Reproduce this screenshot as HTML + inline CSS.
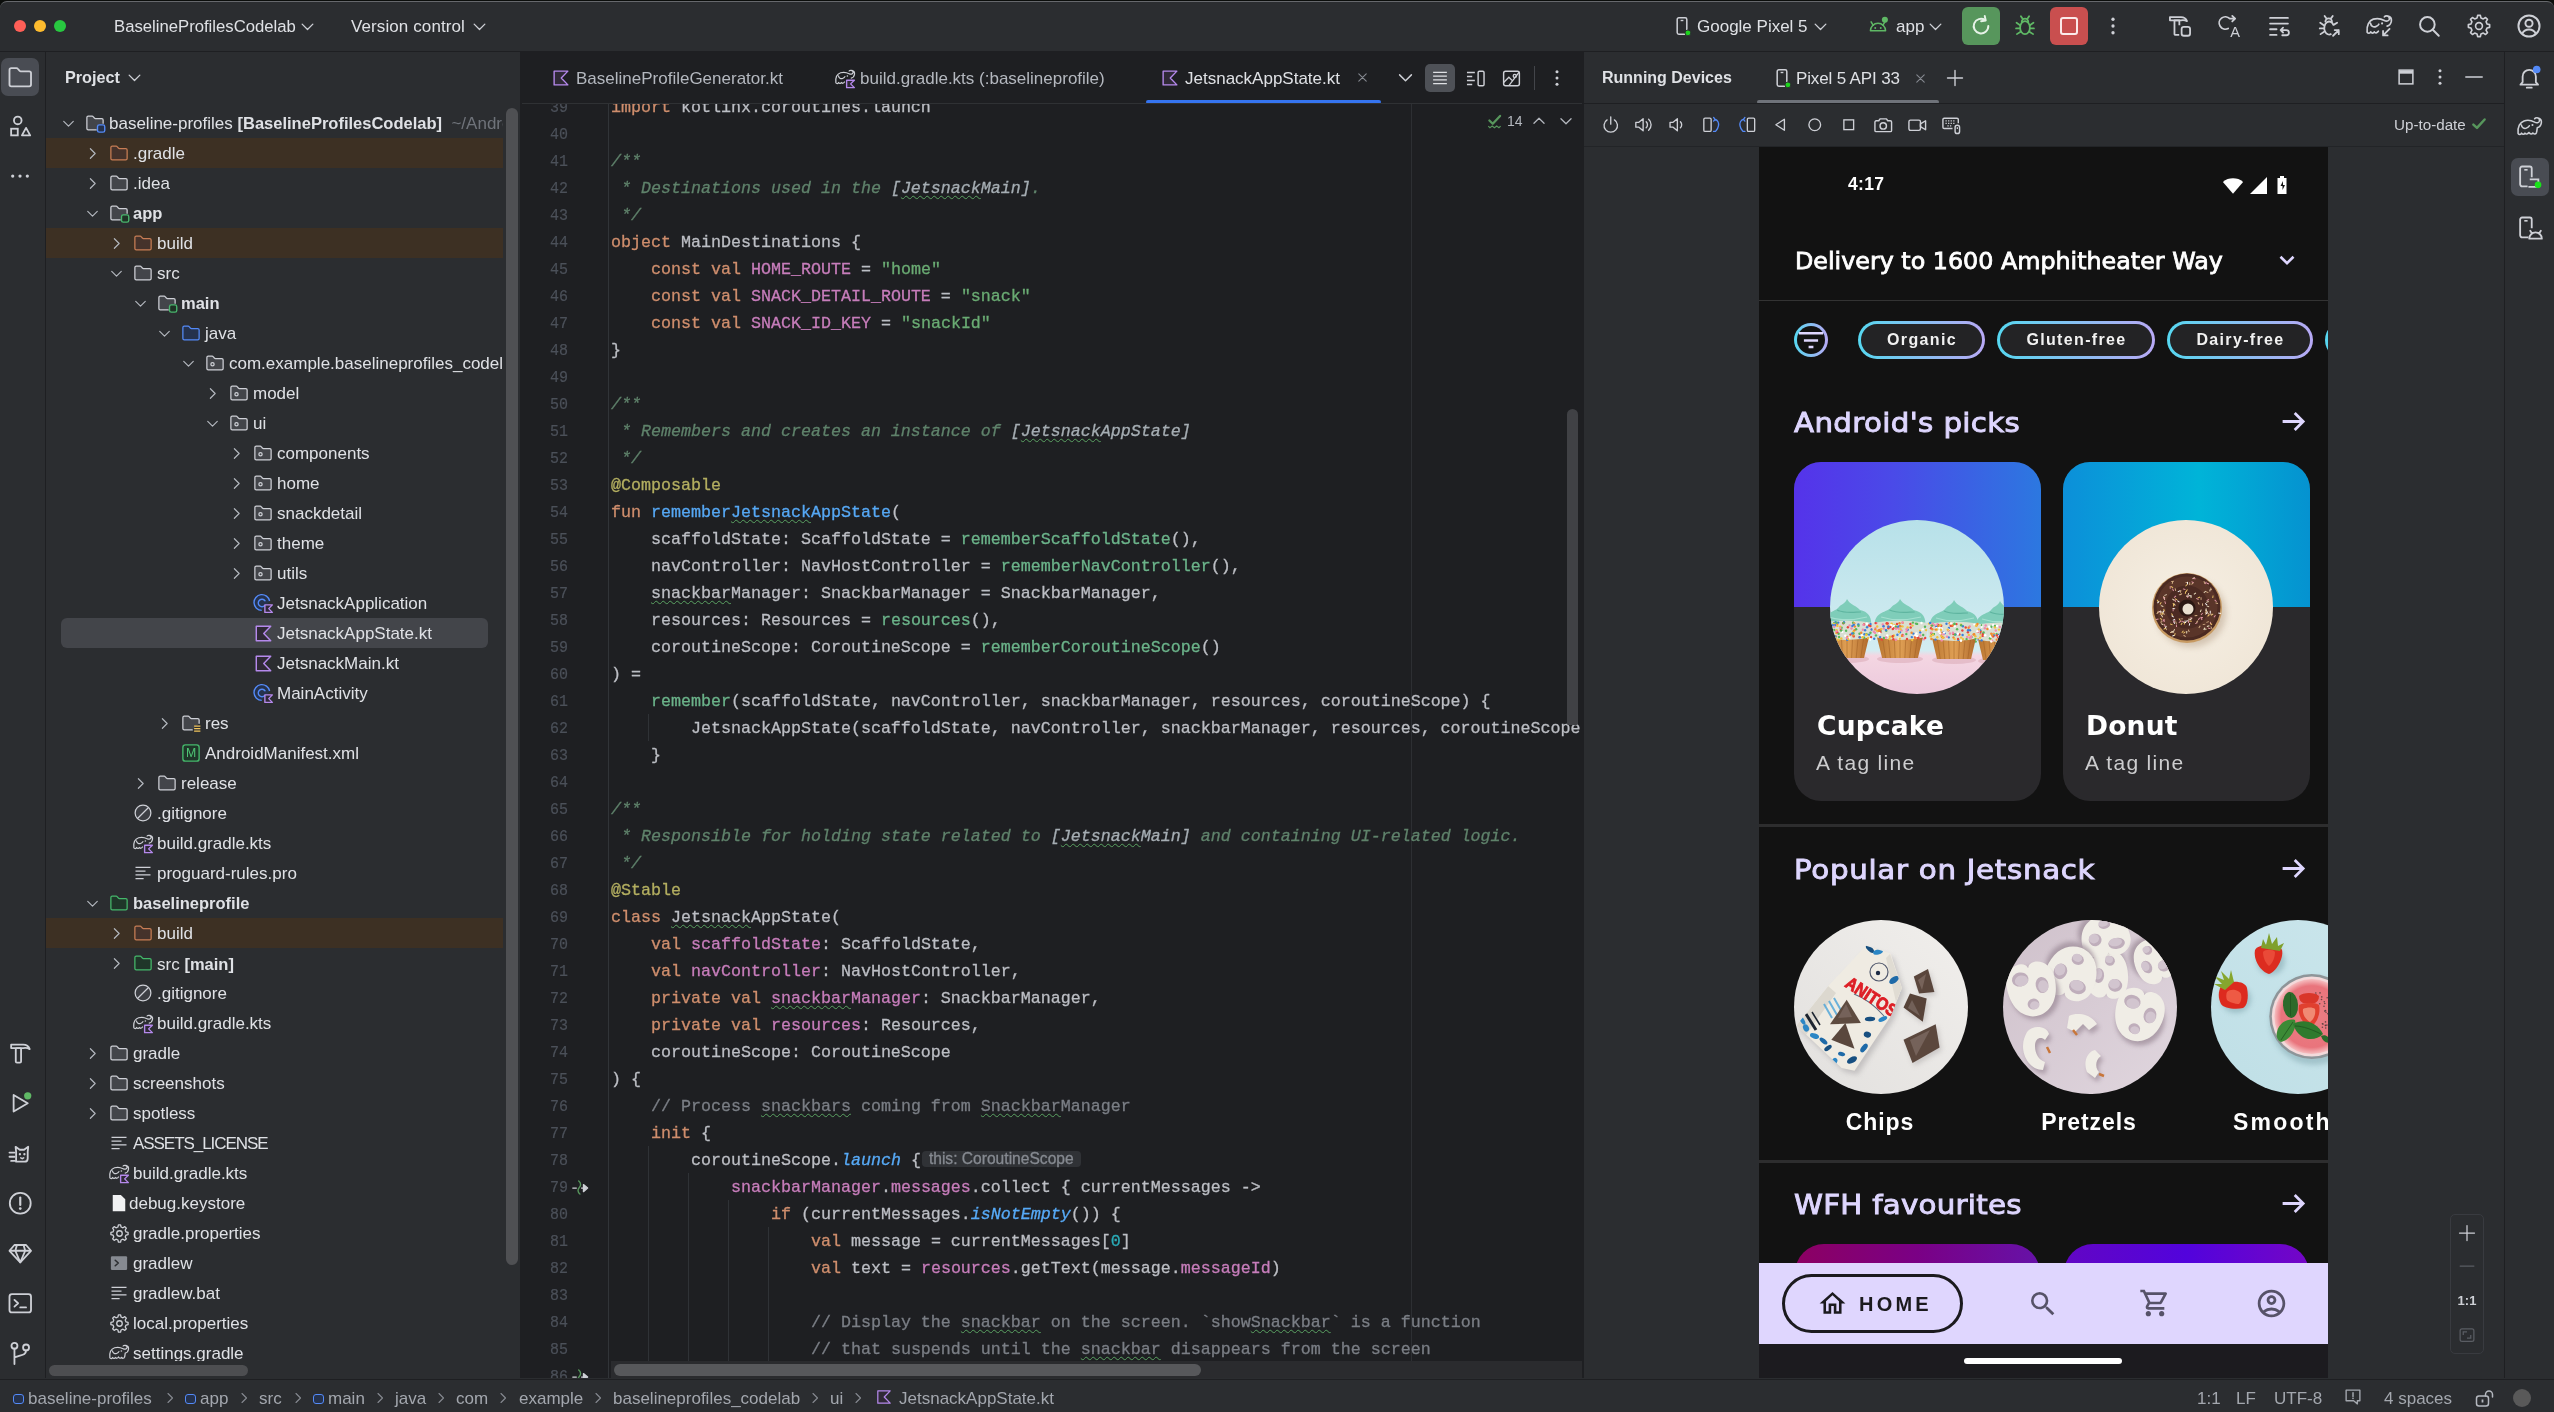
<!DOCTYPE html><html><head><meta charset="utf-8"><title>Android Studio</title><style>
*{box-sizing:border-box;margin:0;padding:0}
html,body{width:2554px;height:1412px;overflow:hidden;background:#2b2d30}
body{position:relative;font-family:"Liberation Sans",sans-serif;font-size:17px;color:#dfe1e5;-webkit-font-smoothing:antialiased}
#w{position:absolute;left:0;top:0;width:2554px;height:1412px;overflow:hidden;will-change:transform}
.abs{position:absolute}
svg{display:block;overflow:visible}
.b{font-weight:700;font-size:16.5px}
.mono{font-family:"Liberation Mono",monospace}
/* tree */
.row{position:absolute;left:46px;width:457px;height:30px;overflow:hidden;white-space:nowrap}
.row.ex{background:#3d3023}
.row .ic{position:absolute;top:5px}
.row .ch{position:absolute;top:5px}
.row .tx{position:absolute;top:1px;line-height:30px;white-space:pre}
.row .tx.bo{top:0}
.gray{color:#6f737a}
/* code */
.ln{position:absolute;left:522px;width:46px;text-align:right;font-family:"Liberation Mono",monospace;font-size:16.67px;line-height:27px;height:27px;color:#4b5059;transform:scaleX(.9);transform-origin:100% 50%;-webkit-text-stroke:.2px}
.cl{position:absolute;left:611px;font-family:"Liberation Mono",monospace;font-size:16.67px;line-height:27px;height:27px;white-space:pre;color:#bcbec4;-webkit-text-stroke:.3px}
.k{color:#cf8e6d}.s{color:#6aab73}.d{color:#5f826b;font-style:italic}.dl{color:#a5adb3;font-style:italic}
.c{color:#7a7e85}.p{color:#c77dbb}.f{color:#56a8f5}.a{color:#b3ae60}.g{color:#6bb38a}.e{color:#57aaf7;font-style:italic}.n{color:#2aacb8}
.t{text-decoration:underline wavy #5aa262;text-decoration-thickness:1.200px;text-underline-offset:2px;text-decoration-skip-ink:none}
.hint{display:inline-block;font-family:"Liberation Sans",sans-serif;font-size:15.600px;line-height:16px;height:16px;color:#868a91;background:#303236;border-radius:4px;padding:0 7px;margin-left:1px;position:relative;top:-1px;vertical-align:baseline}
.guide{position:absolute;width:1px;background:#2f3236}

.tbk{position:absolute;top:0;left:0;width:2554px;height:10px;background:#0b0d0b}
.tb{position:absolute;top:1px;left:0;width:2554px;height:51px;background:#2b2d30;border-bottom:1px solid #1e1f22;border-top:1px solid #66686c;border-radius:7px 7px 0 0}
.tb>*{margin-top:-2px}
.sb{position:absolute;top:1379px;left:0;width:2554px;height:33px;background:#2b2d30;border-top:1px solid #1e1f22;color:#a3a7ae;white-space:pre}
.sb .x{position:absolute;top:7.500px;line-height:22px}
.sb .sep{position:absolute;top:10px}
.ti{position:absolute;top:13px}

.dj{font-family:"DejaVu Sans","Liberation Sans",sans-serif}
.ph{position:absolute;left:1759px;top:147px;width:569px;height:1231px;background:#121212;overflow:hidden}
.ph .h{position:absolute;left:35px;-webkit-text-stroke:1px #ded6fe;color:#ded6fe;font-family:"DejaVu Sans","Liberation Sans",sans-serif;font-size:29.300px;line-height:40px;white-space:pre;transform:scaleY(.92);transform-origin:0 50%}
.ph .dv{position:absolute;left:0;width:569px;height:3px;background:#2d2d2e}
.chip{position:absolute;top:174px;height:38px;border-radius:19px;background:linear-gradient(90deg,#56d7f0,#b8a9f5);}
.chip i{position:absolute;left:3px;top:3px;right:3px;bottom:3px;border-radius:16px;background:#232325}
.chip b{position:absolute;left:0;right:0;top:0;line-height:37px;text-align:center;font-size:16px;letter-spacing:1.350px;color:#f1f1f1;padding-left:1px}
.card{position:absolute;top:315px;width:247px;height:339px;border-radius:27px;background:#2a292c;overflow:hidden}
.card .gr{position:absolute;left:0;top:0;width:247px;height:145px}
.card .nm{position:absolute;left:23px;top:244px;font-family:"DejaVu Sans","Liberation Sans",sans-serif;font-weight:700;font-size:26.500px;line-height:40px;color:#fff;letter-spacing:.2px}
.card .tg{position:absolute;left:22px;top:286px;font-size:21px;line-height:30px;color:#cdcdcf;letter-spacing:1.300px}
.circ{position:absolute;width:174px;height:174px;border-radius:50%;overflow:hidden}
.lbl{position:absolute;top:957px;width:220px;text-align:center;font-weight:700;font-size:23px;letter-spacing:.9px;line-height:36px;color:#fff;white-space:pre}

.ls{position:absolute;left:0;top:52px;width:46px;height:1326px;background:#2b2d30;border-right:1px solid #1e1f22}
.rs{position:absolute;left:2504px;top:52px;width:50px;height:1326px;background:#2b2d30;border-left:1px solid #1e1f22}
</style></head><body><div id="w">
<div class="tbk"></div><div class="tb">
<div class="abs" style="left:14px;top:20px;width:12px;height:12px;border-radius:50%;background:#ff5f57"></div>
<div class="abs" style="left:34px;top:20px;width:12px;height:12px;border-radius:50%;background:#febc2e"></div>
<div class="abs" style="left:54px;top:20px;width:12px;height:12px;border-radius:50%;background:#28c840"></div>
<div class="abs" style="left:114px;top:15px;line-height:24px;font-size:16.700px">BaselineProfilesCodelab</div>
<div class="abs" style="left:298px;top:17px"><svg class="" width="19" height="19" viewBox="0 0 16 16" style="" fill="none"><path d="M3.500 6L8 10.500 12.500 6" stroke="#ced0d6" stroke-width="1.100" stroke-linecap="round" stroke-linejoin="round"/></svg></div>
<div class="abs" style="left:351px;top:15px;line-height:24px;letter-spacing:.1px">Version control</div>
<div class="abs" style="left:470px;top:17px"><svg class="" width="19" height="19" viewBox="0 0 16 16" style="" fill="none"><path d="M3.500 6L8 10.500 12.500 6" stroke="#ced0d6" stroke-width="1.100" stroke-linecap="round" stroke-linejoin="round"/></svg></div>
<div class="abs" style="left:1671.0px;top:15px"><svg class="" width="22" height="22" viewBox="0 0 16 16" style="" fill="none"><rect x="4.500" y="2" width="7" height="12" rx="1.200" stroke="#ced0d6" stroke-width="1.100"/><path d="M7 4h2" stroke="#ced0d6" stroke-width="1"/><circle cx="12.300" cy="13" r="2.100" fill="#1ed31e" stroke="#2b2d30" stroke-width=".7"/></svg></div>
<div class="abs" style="left:1697px;top:15px;line-height:24px">Google Pixel 5</div>
<div class="abs" style="left:1811px;top:17px"><svg class="" width="19" height="19" viewBox="0 0 16 16" style="" fill="none"><path d="M3.500 6L8 10.500 12.500 6" stroke="#ced0d6" stroke-width="1.100" stroke-linecap="round" stroke-linejoin="round"/></svg></div>
<div class="abs" style="left:1867.0px;top:15px"><svg class="" width="22" height="22" viewBox="0 0 16 16" style="" fill="none"><path d="M2.500 11.500a5.500 5.500 0 0 1 11 0z" stroke="#5fb865" stroke-width="1.100" stroke-linejoin="round"/><path d="M4.500 7.500L3 5M11.500 7.500L13 5" stroke="#5fb865" stroke-width="1.100" stroke-linecap="round"/><circle cx="6" cy="9.500" r=".7" fill="#5fb865"/><circle cx="10" cy="9.500" r=".7" fill="#5fb865"/><circle cx="13" cy="3.500" r="2.200" fill="#5fb865"/></svg></div>
<div class="abs" style="left:1896px;top:15px;line-height:24px">app</div>
<div class="abs" style="left:1926px;top:17px"><svg class="" width="19" height="19" viewBox="0 0 16 16" style="" fill="none"><path d="M3.500 6L8 10.500 12.500 6" stroke="#ced0d6" stroke-width="1.100" stroke-linecap="round" stroke-linejoin="round"/></svg></div>
<div class="abs" style="left:1962px;top:7px;width:38px;height:38px;border-radius:6px;background:#57965c"></div>
<div class="abs" style="left:1968.0px;top:13px"><svg class="" width="26" height="26" viewBox="0 0 16 16" style="" fill="none"><path d="M12.500 8A4.500 4.500 0 1 1 10.500 4.300" stroke="#e6f2e7" stroke-width="1.200" stroke-linecap="round"/><path d="M10.300 1.800l.6 2.800-2.800.5" stroke="#e6f2e7" stroke-width="1.200" stroke-linecap="round" stroke-linejoin="round"/></svg></div>
<div class="abs" style="left:2012.0px;top:13px"><svg class="" width="26" height="26" viewBox="0 0 16 16" style="" fill="none"><ellipse cx="8" cy="9" rx="3" ry="4" stroke="#5fb865" stroke-width="1.100"/><path d="M6 5.500a2 2 0 0 1 4 0M5 7.500L2.800 6M11 7.500L13.200 6M5 9.500H2.500M11 9.500h2.500M5.300 11.500L3 13M10.700 11.500L13 13M6.500 3.500L5.500 2M9.500 3.500l1-1.500" stroke="#5fb865" stroke-width="1.100" stroke-linecap="round"/></svg></div>
<div class="abs" style="left:2050px;top:7px;width:38px;height:38px;border-radius:6px;background:#c94f4f"></div>
<div class="abs" style="left:2060px;top:17px;width:18px;height:18px;border-radius:3px;border:2px solid #fbeaea"></div>
<div class="abs" style="left:2101.0px;top:14px"><svg class="" width="24" height="24" viewBox="0 0 16 16" style="" fill="none"><circle cx="8" cy="3.500" r="1.100" fill="#ced0d6"/><circle cx="8" cy="8" r="1.100" fill="#ced0d6"/><circle cx="8" cy="12.500" r="1.100" fill="#ced0d6"/></svg></div>
<div class="abs" style="left:2167.0px;top:13px"><svg class="" width="26" height="26" viewBox="0 0 16 16" style="" fill="none"><path d="M1.800 2.500h6.800c1.900 0 3.100.9 3.700 2.500-1.100-.6-2.400-.8-3.700-.5H1.800z" stroke="#ced0d6" stroke-width="1.100" stroke-linejoin="round"/><path d="M7.500 13.500H5.200a.6.6 0 0 1-.6-.6V4.600h3v3" stroke="#ced0d6" stroke-width="1.100" stroke-linejoin="round"/><rect x="9" y="8.500" width="5.200" height="5.500" rx="1.400" stroke="#ced0d6" stroke-width="1.100"/></svg></div>
<div class="abs" style="left:2216.0px;top:13px"><svg class="" width="26" height="26" viewBox="0 0 16 16" style="" fill="none"><path d="M7.500 9.500A3.800 3.800 0 1 1 8.500 3.500h3M10 1.800l1.800 1.700L10 5.200" stroke="#ced0d6" stroke-width="1.100" stroke-linecap="round" stroke-linejoin="round"/><text x="11.800" y="14.600" font-family="Liberation Sans, sans-serif" font-size="9" text-anchor="middle" fill="#ced0d6">A</text></svg></div>
<div class="abs" style="left:2266.0px;top:13px"><svg class="" width="26" height="26" viewBox="0 0 16 16" style="" fill="none"><path d="M2.500 3h11M2.500 6.500h11M2.500 10h4M2.500 13.500h4" stroke="#ced0d6" stroke-width="1.100" stroke-linecap="round"/><path d="M9 10.500h3.500a1.600 1.600 0 0 1 0 3.200H10M10.500 9L9 10.500l1.500 1.500" stroke="#ced0d6" stroke-width="1.100" stroke-linecap="round" stroke-linejoin="round"/></svg></div>
<div class="abs" style="left:2316.0px;top:13px"><svg class="" width="26" height="26" viewBox="0 0 16 16" style="" fill="none"><path d="M9.500 12.800A3 4 0 1 1 10.800 7.500" stroke="#ced0d6" stroke-width="1.100"/><path d="M5.800 5.300a2 2 0 0 1 4 0M4.800 7.500L2.600 6M10.800 7.300L13 6M4.800 9.500H2.300M5 11.500L2.800 13M6.300 3.300l-1-1.500M9.300 3.300l1-1.500" stroke="#ced0d6" stroke-width="1.100" stroke-linecap="round"/><path d="M10.500 14l3.500-3.500M11.500 10.500H14V13" stroke="#ced0d6" stroke-width="1.100" stroke-linecap="round" stroke-linejoin="round"/></svg></div>
<div class="abs" style="left:2366.0px;top:13px"><svg class="" width="26" height="26" viewBox="0 0 16 16" style="" fill="none"><path d="M.7 11.8C.2 7.500 2 4.600 4.500 3.800 7 3 9.500 3.600 11.300 4.600c1.300.7 2.600.4 3-.6.400-1.100-.4-2.200-1.600-2.200-.7 0-1.200.3-1.400.6M13.500 1.900c1.500.4 2.300 1.700 2.100 3.100-.3 1.700-1.300 2.800-2.600 3.100M2.800 6.400C3 8 4.600 9 6 8.400c1-.4 1.700-1 1.900-1.500M.7 11.800c.7 1 1.700.8 2.200-.2.600 1 1.700 1 2.200 0 .6.900 1.700.8 2.500-.4" stroke="#ced0d6" stroke-width="1.050" stroke-linecap="round" stroke-linejoin="round"/><circle cx="9.900" cy="6.400" r=".65" fill="#ced0d6"/><path d="M14.500 9.800l-4 4M10.500 11v2.800h2.800" stroke="#ced0d6" stroke-width="1.100" stroke-linecap="round" stroke-linejoin="round"/></svg></div>
<div class="abs" style="left:2416.0px;top:13px"><svg class="" width="26" height="26" viewBox="0 0 16 16" style="" fill="none"><circle cx="7" cy="7" r="4.500" stroke="#ced0d6" stroke-width="1.200"/><path d="M10.500 10.500L14 14" stroke="#ced0d6" stroke-width="1.200" stroke-linecap="round"/></svg></div>
<div class="abs" style="left:2466px;top:13px"><svg class="" width="26" height="26" viewBox="0 0 16 16" style="" fill="none"><path d="M12.96 6.81 L14.55 7.17 L14.55 8.83 L12.96 9.19 L12.35 10.66 L13.22 12.05 L12.05 13.22 L10.66 12.35 L9.19 12.96 L8.83 14.55 L7.17 14.55 L6.81 12.96 L5.34 12.35 L3.95 13.22 L2.78 12.05 L3.65 10.66 L3.04 9.19 L1.45 8.83 L1.45 7.17 L3.04 6.81 L3.65 5.34 L2.78 3.95 L3.95 2.78 L5.34 3.65 L6.81 3.04 L7.17 1.45 L8.83 1.45 L9.19 3.04 L10.66 3.65 L12.05 2.78 L13.22 3.95 L12.35 5.34Z" stroke="#ced0d6" stroke-width="1" stroke-linejoin="round"/><circle cx="8" cy="8" r="2.100" stroke="#ced0d6" stroke-width="1"/></svg></div>
<div class="abs" style="left:2516.0px;top:13px"><svg class="" width="26" height="26" viewBox="0 0 16 16" style="" fill="none"><circle cx="8" cy="8" r="6.500" stroke="#ced0d6" stroke-width="1.200"/><circle cx="8" cy="6.300" r="2.200" stroke="#ced0d6" stroke-width="1.200"/><path d="M3.800 12.800c.8-1.800 2.300-2.600 4.200-2.600s3.400.8 4.200 2.600" stroke="#ced0d6" stroke-width="1.200"/></svg></div>
</div>
<div class="sb">
<div class="abs" style="left:13px;top:13.500px;width:10.500px;height:10.500px;border-radius:3px;border:1.600px solid #548af7;background:#25324d"></div><div class="x" style="left:28px">baseline-profiles</div><div class="sep" style="left:162px"><svg class="" width="16" height="16" viewBox="0 0 16 16" style="" fill="none"><path d="M6 3.500L10.500 8 6 12.500" stroke="#868a91" stroke-width="1.100" stroke-linecap="round" stroke-linejoin="round"/></svg></div><div class="abs" style="left:185px;top:13.500px;width:10.500px;height:10.500px;border-radius:3px;border:1.600px solid #548af7;background:#25324d"></div><div class="x" style="left:200px">app</div><div class="sep" style="left:236px"><svg class="" width="16" height="16" viewBox="0 0 16 16" style="" fill="none"><path d="M6 3.500L10.500 8 6 12.500" stroke="#868a91" stroke-width="1.100" stroke-linecap="round" stroke-linejoin="round"/></svg></div><div class="x" style="left:259px">src</div><div class="sep" style="left:290px"><svg class="" width="16" height="16" viewBox="0 0 16 16" style="" fill="none"><path d="M6 3.500L10.500 8 6 12.500" stroke="#868a91" stroke-width="1.100" stroke-linecap="round" stroke-linejoin="round"/></svg></div><div class="abs" style="left:313px;top:13.500px;width:10.500px;height:10.500px;border-radius:3px;border:1.600px solid #548af7;background:#25324d"></div><div class="x" style="left:328px">main</div><div class="sep" style="left:372px"><svg class="" width="16" height="16" viewBox="0 0 16 16" style="" fill="none"><path d="M6 3.500L10.500 8 6 12.500" stroke="#868a91" stroke-width="1.100" stroke-linecap="round" stroke-linejoin="round"/></svg></div><div class="x" style="left:395px">java</div><div class="sep" style="left:433px"><svg class="" width="16" height="16" viewBox="0 0 16 16" style="" fill="none"><path d="M6 3.500L10.500 8 6 12.500" stroke="#868a91" stroke-width="1.100" stroke-linecap="round" stroke-linejoin="round"/></svg></div><div class="x" style="left:456px">com</div><div class="sep" style="left:495px"><svg class="" width="16" height="16" viewBox="0 0 16 16" style="" fill="none"><path d="M6 3.500L10.500 8 6 12.500" stroke="#868a91" stroke-width="1.100" stroke-linecap="round" stroke-linejoin="round"/></svg></div><div class="x" style="left:519px">example</div><div class="sep" style="left:590px"><svg class="" width="16" height="16" viewBox="0 0 16 16" style="" fill="none"><path d="M6 3.500L10.500 8 6 12.500" stroke="#868a91" stroke-width="1.100" stroke-linecap="round" stroke-linejoin="round"/></svg></div><div class="x" style="left:613px">baselineprofiles_codelab</div><div class="sep" style="left:807px"><svg class="" width="16" height="16" viewBox="0 0 16 16" style="" fill="none"><path d="M6 3.500L10.500 8 6 12.500" stroke="#868a91" stroke-width="1.100" stroke-linecap="round" stroke-linejoin="round"/></svg></div><div class="x" style="left:830px">ui</div><div class="sep" style="left:850px"><svg class="" width="16" height="16" viewBox="0 0 16 16" style="" fill="none"><path d="M6 3.500L10.500 8 6 12.500" stroke="#868a91" stroke-width="1.100" stroke-linecap="round" stroke-linejoin="round"/></svg></div>
<div class="abs" style="left:875px;top:8px"><svg class="" width="18" height="18" viewBox="0 0 16 16" style="" fill="none"><path d="M2.5 2.5h11L8.2 8l5.3 5.5h-11z" fill="#2f2936" stroke="#b589ec" stroke-width="1.1" stroke-linejoin="round"/></svg></div>
<div class="x" style="left:899px">JetsnackAppState.kt</div>
<div class="x" style="left:2197px">1:1</div><div class="x" style="left:2236px">LF</div><div class="x" style="left:2274px">UTF-8</div><div class="x" style="left:2384px">4 spaces</div>
<div class="abs" style="left:2343px;top:7px"><svg class="" width="20" height="20" viewBox="0 0 16 16" style="" fill="none"><path d="M2.500 2.500h11v8.500h-2v2.500l-3-2.500h-6z" stroke="#a3a7ae" stroke-width="1.100" stroke-linejoin="round"/><path d="M8 4.500v3" stroke="#a3a7ae" stroke-width="1.200" stroke-linecap="round"/><circle cx="8" cy="9" r=".7" fill="#a3a7ae"/></svg></div>
<div class="abs" style="left:2472px;top:8px"><svg class="" width="24" height="24" viewBox="0 0 24 24" style="" fill="none"><rect x="4.500" y="8" width="12" height="10" rx="2.500" stroke="#b4b8bf" stroke-width="1.500"/><path d="M13.500 8V6.500a3.500 3.500 0 0 1 7 0V9" stroke="#b4b8bf" stroke-width="1.500" stroke-linecap="round"/><path d="M10.500 11.500v3" stroke="#b4b8bf" stroke-width="1.800"/></svg></div>
<div class="abs" style="left:2513px;top:9px;width:18px;height:18px;border-radius:50%;background:#595959"></div>
</div>
<div class="ls"></div>
<div class="abs" style="left:1px;top:58px;width:38px;height:38px;border-radius:7px;background:#494c53"></div>
<div class="abs" style="left:6.75px;top:63.75px"><svg class="" width="26.5" height="26.5" viewBox="0 0 16 16" style="" fill="none"><path d="M1.5 3.6c0-.6.5-1.1 1.1-1.1h3.1c.3 0 .6.1.8.4l1 1.1c.2.2.5.4.8.4h5.1c.6 0 1.1.5 1.1 1.1v6.9c0 .6-.5 1.1-1.1 1.1H2.6c-.6 0-1.1-.5-1.1-1.1z" stroke="#ced0d6" stroke-width="1.100"/></svg></div>
<div class="abs" style="left:6.75px;top:112.75px"><svg class="" width="26.5" height="26.5" viewBox="0 0 16 16" style="" fill="none"><circle cx="6.500" cy="4.500" r="2.300" stroke="#ced0d6" stroke-width="1.100"/><rect x="2.500" y="9.500" width="4" height="4" stroke="#ced0d6" stroke-width="1.100"/><path d="M11.500 9l2.500 4.500h-5z" stroke="#ced0d6" stroke-width="1.100" stroke-linejoin="round"/></svg></div>
<div class="abs" style="left:7.0px;top:163.0px"><svg class="" width="26" height="26" viewBox="0 0 16 16" style="" fill="none"><circle cx="3.500" cy="8" r="1" fill="#ced0d6"/><circle cx="8" cy="8" r="1" fill="#ced0d6"/><circle cx="12.500" cy="8" r="1" fill="#ced0d6"/></svg></div>
<div class="abs" style="left:6.75px;top:1039.75px"><svg class="" width="26.5" height="26.5" viewBox="0 0 16 16" style="" fill="none"><path d="M2.500 2.800h7.300c2 0 3.300 1 3.900 2.700-1.200-.7-2.500-.9-3.900-.6H2.500z" stroke="#ced0d6" stroke-width="1.100" stroke-linejoin="round"/><rect x="5.300" y="4.900" width="3.200" height="8.800" rx=".7" stroke="#ced0d6" stroke-width="1.100"/></svg></div>
<div class="abs" style="left:6.75px;top:1089.75px"><svg class="" width="26.5" height="26.5" viewBox="0 0 16 16" style="" fill="none"><path d="M4 3l8.500 5L4 13z" stroke="#ced0d6" stroke-width="1.100" stroke-linejoin="round"/><circle cx="12.500" cy="3.500" r="2.200" fill="#5fb865"/></svg></div>
<div class="abs" style="left:6.75px;top:1140.75px"><svg class="" width="26.5" height="26.5" viewBox="0 0 16 16" style="" fill="none"><path d="M5.500 12.500V6.500l-.3-3 2.500 1.800h2.600l2.500-1.800-.3 3v4c0 1.200-.8 2-2 2z" stroke="#ced0d6" stroke-width="1.100" stroke-linejoin="round"/><path d="M1.500 7h3M1.500 9.500h3M2.500 12h2.500" stroke="#ced0d6" stroke-width="1.100" stroke-linecap="round"/><circle cx="7.800" cy="8" r=".7" fill="#ced0d6"/><circle cx="10.500" cy="8" r=".7" fill="#ced0d6"/><path d="M8.300 10.200l.9.500.9-.5" stroke="#ced0d6" stroke-width=".9" stroke-linecap="round"/></svg></div>
<div class="abs" style="left:6.75px;top:1189.75px"><svg class="" width="26.5" height="26.5" viewBox="0 0 16 16" style="" fill="none"><circle cx="8" cy="8" r="6.300" stroke="#ced0d6" stroke-width="1.100"/><path d="M8 4.500v4.500" stroke="#ced0d6" stroke-width="1.300" stroke-linecap="round"/><circle cx="8" cy="11.200" r=".8" fill="#ced0d6"/></svg></div>
<div class="abs" style="left:6.75px;top:1239.75px"><svg class="" width="26.5" height="26.5" viewBox="0 0 16 16" style="" fill="none"><path d="M4.500 3h7l3 3.500L8 13.500 1.500 6.500z" stroke="#ced0d6" stroke-width="1.100" stroke-linejoin="round"/><path d="M1.500 6.500h13M6 3L5 6.500 8 13.500 11 6.500 10 3" stroke="#ced0d6" stroke-width="1.100" stroke-linejoin="round"/></svg></div>
<div class="abs" style="left:6.75px;top:1289.75px"><svg class="" width="26.5" height="26.5" viewBox="0 0 16 16" style="" fill="none"><rect x="1.500" y="2.500" width="13" height="11" rx="1.500" stroke="#ced0d6" stroke-width="1.100"/><path d="M4.500 6l2.200 2-2.200 2M8 10.500h3.500" stroke="#ced0d6" stroke-width="1.100" stroke-linecap="round" stroke-linejoin="round"/></svg></div>
<div class="abs" style="left:6.75px;top:1339.75px"><svg class="" width="26.5" height="26.5" viewBox="0 0 16 16" style="" fill="none"><circle cx="4.500" cy="3.500" r="1.800" stroke="#ced0d6" stroke-width="1.100"/><circle cx="11.500" cy="4.500" r="1.800" stroke="#ced0d6" stroke-width="1.100"/><path d="M4.500 5.300V14.500M11.500 6.300c0 3-3 2.500-7 4.200" stroke="#ced0d6" stroke-width="1.100" stroke-linecap="round"/></svg></div>
<div class="rs"></div>
<div class="abs" style="left:2515.75px;top:63.75px"><svg class="" width="26.5" height="26.5" viewBox="0 0 16 16" style="" fill="none"><path d="M4 11V7.500a4 4 0 0 1 8 0V11l1.300 1.500H2.700z" stroke="#ced0d6" stroke-width="1.100" stroke-linejoin="round"/><path d="M6.500 14.300h3" stroke="#ced0d6" stroke-width="1.100" stroke-linecap="round"/><circle cx="12.500" cy="3.300" r="2.300" fill="#548af7"/></svg></div>
<div class="abs" style="left:2516.5px;top:114.5px"><svg class="" width="25" height="25" viewBox="0 0 16 16" style="" fill="none"><path d="M.7 11.8C.2 7.500 2 4.600 4.500 3.800 7 3 9.500 3.600 11.300 4.600c1.300.7 2.600.4 3-.6.400-1.100-.4-2.200-1.600-2.200-.7 0-1.200.3-1.400.6M13.500 1.900c1.500.4 2.300 1.700 2.100 3.100-.3 1.700-1.300 2.800-2.600 3.100M2.800 6.400C3 8 4.600 9 6 8.400c1-.4 1.700-1 1.900-1.500M.7 11.800c.7 1 1.700.8 2.200-.2.600 1 1.700 1 2.200 0 .6.900 1.700.8 2.500-.4M7.600 11.200c.9 1.200 1.900 1.200 2.500.3.600 1 1.800.9 2.300-.1.400-1 .4-2.400.6-3.300" stroke="#ced0d6" stroke-width="1" stroke-linecap="round" stroke-linejoin="round"/><circle cx="9.900" cy="6.400" r=".65" fill="#ced0d6"/></svg></div>
<div class="abs" style="left:2511px;top:158px;width:38px;height:38px;border-radius:7px;background:#494c53"></div>
<div class="abs" style="left:2515.75px;top:163.75px"><svg class="" width="26.5" height="26.5" viewBox="0 0 16 16" style="" fill="none"><rect x="2.500" y="1.500" width="7" height="12" rx="1.200" stroke="#ced0d6" stroke-width="1.100"/><path d="M5 3.500h2" stroke="#ced0d6" stroke-width="1"/><rect x="7" y="8" width="8" height="6.500" fill="#494c53"/><path d="M8.300 9.300h5.200v4.500H7.500" stroke="#ced0d6" stroke-width="1.100" fill="none"/><circle cx="13.300" cy="12.600" r="2" fill="#19e319"/></svg></div>
<div class="abs" style="left:2515.75px;top:214.75px"><svg class="" width="26.5" height="26.5" viewBox="0 0 16 16" style="" fill="none"><rect x="2.500" y="1.500" width="7" height="12" rx="1.200" stroke="#ced0d6" stroke-width="1.100"/><path d="M5 3.500h2" stroke="#ced0d6" stroke-width="1"/><rect x="7.500" y="8" width="8" height="7" fill="#2b2d30"/><path d="M8 14.300a3.800 3.800 0 0 1 7.600 0zM9.600 11l-1-1.500M14 11l1-1.500" stroke="#ced0d6" stroke-width="1.100" stroke-linejoin="round" stroke-linecap="round"/></svg></div>
<div class="abs" style="left:46px;top:52px;width:474px;height:1326px;background:#2b2d30;overflow:hidden">
</div>
<div class="abs b" style="left:65px;top:66px;line-height:22px;font-size:16.2px">Project</div>
<div class="abs" style="left:125px;top:68px"><svg class="" width="19" height="19" viewBox="0 0 16 16" style="" fill="none"><path d="M3.500 6L8 10.500 12.500 6" stroke="#ced0d6" stroke-width="1.100" stroke-linecap="round" stroke-linejoin="round"/></svg></div>
<div class="abs" style="left:0;top:108px;width:520px;height:1253px;overflow:hidden">
<div class="row" style="top:0px"><div class="ch" style="left:13.5px;top:6.5px"><svg class="" width="17" height="17" viewBox="0 0 16 16" style="" fill="none"><path d="M3.500 6L8 10.500 12.500 6" stroke="#b4b8bf" stroke-width="1.100" stroke-linecap="round" stroke-linejoin="round"/></svg></div><div class="ic" style="left:39px;top:4.500px"><svg class="" width="20" height="20" viewBox="0 0 16 16" style="" fill="none"><path d="M9 13.5H2.6c-.6 0-1.1-.5-1.1-1.1V3.6c0-.6.5-1.1 1.1-1.1h3.1c.3 0 .6.1.8.4l1 1.1c.2.2.5.4.8.4h5.1c.6 0 1.1.5 1.1 1.1V8.2" fill="#43454a" stroke="#ced0d6" stroke-width="1" stroke-linecap="round"/><rect x="10" y="9.500" width="5.800" height="5.800" rx="1.400" fill="#25324d" stroke="#548af7" stroke-width="1.1"/></svg></div><div class="tx bo" style="left:63px">baseline-profiles <span class="b">[BaselineProfilesCodelab]</span><span class="gray">  ~/AndroidStudioProjects</span></div></div>
<div class="row ex" style="top:30px"><div class="ch" style="left:37.5px;top:6.5px"><svg class="" width="17" height="17" viewBox="0 0 16 16" style="" fill="none"><path d="M6 3.500L10.500 8 6 12.500" stroke="#b4b8bf" stroke-width="1.100" stroke-linecap="round" stroke-linejoin="round"/></svg></div><div class="ic" style="left:63px;top:4.500px"><svg class="" width="20" height="20" viewBox="0 0 16 16" style="" fill="none"><path d="M1.5 3.6c0-.6.5-1.1 1.1-1.1h3.1c.3 0 .6.1.8.4l1 1.1c.2.2.5.4.8.4h5.1c.6 0 1.1.5 1.1 1.1v6.9c0 .6-.5 1.1-1.1 1.1H2.6c-.6 0-1.1-.5-1.1-1.1z" fill="#45322b" stroke="#c77d55" stroke-width="1"/></svg></div><div class="tx" style="left:87px">.gradle</div></div>
<div class="row" style="top:60px"><div class="ch" style="left:37.5px;top:6.5px"><svg class="" width="17" height="17" viewBox="0 0 16 16" style="" fill="none"><path d="M6 3.500L10.500 8 6 12.500" stroke="#b4b8bf" stroke-width="1.100" stroke-linecap="round" stroke-linejoin="round"/></svg></div><div class="ic" style="left:63px;top:4.500px"><svg class="" width="20" height="20" viewBox="0 0 16 16" style="" fill="none"><path d="M1.5 3.6c0-.6.5-1.1 1.1-1.1h3.1c.3 0 .6.1.8.4l1 1.1c.2.2.5.4.8.4h5.1c.6 0 1.1.5 1.1 1.1v6.9c0 .6-.5 1.1-1.1 1.1H2.6c-.6 0-1.1-.5-1.1-1.1z" fill="#43454a" stroke="#ced0d6" stroke-width="1"/></svg></div><div class="tx" style="left:87px">.idea</div></div>
<div class="row" style="top:90px"><div class="ch" style="left:37.5px;top:6.5px"><svg class="" width="17" height="17" viewBox="0 0 16 16" style="" fill="none"><path d="M3.500 6L8 10.500 12.500 6" stroke="#b4b8bf" stroke-width="1.100" stroke-linecap="round" stroke-linejoin="round"/></svg></div><div class="ic" style="left:63px;top:4.500px"><svg class="" width="20" height="20" viewBox="0 0 16 16" style="" fill="none"><path d="M9 13.5H2.6c-.6 0-1.1-.5-1.1-1.1V3.6c0-.6.5-1.1 1.1-1.1h3.1c.3 0 .6.1.8.4l1 1.1c.2.2.5.4.8.4h5.1c.6 0 1.1.5 1.1 1.1V8.2" fill="#43454a" stroke="#ced0d6" stroke-width="1" stroke-linecap="round"/><rect x="10" y="9.500" width="5.800" height="5.800" rx="1.400" fill="#1f3326" stroke="#49b56d" stroke-width="1.1"/></svg></div><div class="tx bo" style="left:87px"><span class="b">app</span></div></div>
<div class="row ex" style="top:120px"><div class="ch" style="left:61.5px;top:6.5px"><svg class="" width="17" height="17" viewBox="0 0 16 16" style="" fill="none"><path d="M6 3.500L10.500 8 6 12.500" stroke="#b4b8bf" stroke-width="1.100" stroke-linecap="round" stroke-linejoin="round"/></svg></div><div class="ic" style="left:87px;top:4.500px"><svg class="" width="20" height="20" viewBox="0 0 16 16" style="" fill="none"><path d="M1.5 3.6c0-.6.5-1.1 1.1-1.1h3.1c.3 0 .6.1.8.4l1 1.1c.2.2.5.4.8.4h5.1c.6 0 1.1.5 1.1 1.1v6.9c0 .6-.5 1.1-1.1 1.1H2.6c-.6 0-1.1-.5-1.1-1.1z" fill="#45322b" stroke="#c77d55" stroke-width="1"/></svg></div><div class="tx" style="left:111px">build</div></div>
<div class="row" style="top:150px"><div class="ch" style="left:61.5px;top:6.5px"><svg class="" width="17" height="17" viewBox="0 0 16 16" style="" fill="none"><path d="M3.500 6L8 10.500 12.500 6" stroke="#b4b8bf" stroke-width="1.100" stroke-linecap="round" stroke-linejoin="round"/></svg></div><div class="ic" style="left:87px;top:4.500px"><svg class="" width="20" height="20" viewBox="0 0 16 16" style="" fill="none"><path d="M1.5 3.6c0-.6.5-1.1 1.1-1.1h3.1c.3 0 .6.1.8.4l1 1.1c.2.2.5.4.8.4h5.1c.6 0 1.1.5 1.1 1.1v6.9c0 .6-.5 1.1-1.1 1.1H2.6c-.6 0-1.1-.5-1.1-1.1z" fill="#43454a" stroke="#ced0d6" stroke-width="1"/></svg></div><div class="tx" style="left:111px">src</div></div>
<div class="row" style="top:180px"><div class="ch" style="left:85.5px;top:6.5px"><svg class="" width="17" height="17" viewBox="0 0 16 16" style="" fill="none"><path d="M3.500 6L8 10.500 12.500 6" stroke="#b4b8bf" stroke-width="1.100" stroke-linecap="round" stroke-linejoin="round"/></svg></div><div class="ic" style="left:111px;top:4.500px"><svg class="" width="20" height="20" viewBox="0 0 16 16" style="" fill="none"><path d="M9 13.5H2.6c-.6 0-1.1-.5-1.1-1.1V3.6c0-.6.5-1.1 1.1-1.1h3.1c.3 0 .6.1.8.4l1 1.1c.2.2.5.4.8.4h5.1c.6 0 1.1.5 1.1 1.1V8.2" fill="#43454a" stroke="#ced0d6" stroke-width="1" stroke-linecap="round"/><rect x="10" y="9.500" width="5.800" height="5.800" rx="1.400" fill="#1f3326" stroke="#49b56d" stroke-width="1.1"/></svg></div><div class="tx bo" style="left:135px"><span class="b">main</span></div></div>
<div class="row" style="top:210px"><div class="ch" style="left:109.5px;top:6.5px"><svg class="" width="17" height="17" viewBox="0 0 16 16" style="" fill="none"><path d="M3.500 6L8 10.500 12.500 6" stroke="#b4b8bf" stroke-width="1.100" stroke-linecap="round" stroke-linejoin="round"/></svg></div><div class="ic" style="left:135px;top:4.500px"><svg class="" width="20" height="20" viewBox="0 0 16 16" style="" fill="none"><path d="M1.5 3.6c0-.6.5-1.1 1.1-1.1h3.1c.3 0 .6.1.8.4l1 1.1c.2.2.5.4.8.4h5.1c.6 0 1.1.5 1.1 1.1v6.9c0 .6-.5 1.1-1.1 1.1H2.6c-.6 0-1.1-.5-1.1-1.1z" fill="#25324d" stroke="#548af7" stroke-width="1"/></svg></div><div class="tx" style="left:159px">java</div></div>
<div class="row" style="top:240px"><div class="ch" style="left:133.5px;top:6.5px"><svg class="" width="17" height="17" viewBox="0 0 16 16" style="" fill="none"><path d="M3.500 6L8 10.500 12.500 6" stroke="#b4b8bf" stroke-width="1.100" stroke-linecap="round" stroke-linejoin="round"/></svg></div><div class="ic" style="left:159px;top:4.500px"><svg class="" width="20" height="20" viewBox="0 0 16 16" style="" fill="none"><path d="M1.5 3.6c0-.6.5-1.1 1.1-1.1h3.1c.3 0 .6.1.8.4l1 1.1c.2.2.5.4.8.4h5.1c.6 0 1.1.5 1.1 1.1v6.9c0 .6-.5 1.1-1.1 1.1H2.6c-.6 0-1.1-.5-1.1-1.1z" fill="#43454a" stroke="#ced0d6" stroke-width="1"/><circle cx="6" cy="9" r="1.3" stroke="#ced0d6" stroke-width="1"/></svg></div><div class="tx" style="left:183px">com.example.baselineprofiles_codelab</div></div>
<div class="row" style="top:270px"><div class="ch" style="left:157.5px;top:6.5px"><svg class="" width="17" height="17" viewBox="0 0 16 16" style="" fill="none"><path d="M6 3.500L10.500 8 6 12.500" stroke="#b4b8bf" stroke-width="1.100" stroke-linecap="round" stroke-linejoin="round"/></svg></div><div class="ic" style="left:183px;top:4.500px"><svg class="" width="20" height="20" viewBox="0 0 16 16" style="" fill="none"><path d="M1.5 3.6c0-.6.5-1.1 1.1-1.1h3.1c.3 0 .6.1.8.4l1 1.1c.2.2.5.4.8.4h5.1c.6 0 1.1.5 1.1 1.1v6.9c0 .6-.5 1.1-1.1 1.1H2.6c-.6 0-1.1-.5-1.1-1.1z" fill="#43454a" stroke="#ced0d6" stroke-width="1"/><circle cx="6" cy="9" r="1.3" stroke="#ced0d6" stroke-width="1"/></svg></div><div class="tx" style="left:207px">model</div></div>
<div class="row" style="top:300px"><div class="ch" style="left:157.5px;top:6.5px"><svg class="" width="17" height="17" viewBox="0 0 16 16" style="" fill="none"><path d="M3.500 6L8 10.500 12.500 6" stroke="#b4b8bf" stroke-width="1.100" stroke-linecap="round" stroke-linejoin="round"/></svg></div><div class="ic" style="left:183px;top:4.500px"><svg class="" width="20" height="20" viewBox="0 0 16 16" style="" fill="none"><path d="M1.5 3.6c0-.6.5-1.1 1.1-1.1h3.1c.3 0 .6.1.8.4l1 1.1c.2.2.5.4.8.4h5.1c.6 0 1.1.5 1.1 1.1v6.9c0 .6-.5 1.1-1.1 1.1H2.6c-.6 0-1.1-.5-1.1-1.1z" fill="#43454a" stroke="#ced0d6" stroke-width="1"/><circle cx="6" cy="9" r="1.3" stroke="#ced0d6" stroke-width="1"/></svg></div><div class="tx" style="left:207px">ui</div></div>
<div class="row" style="top:330px"><div class="ch" style="left:181.5px;top:6.5px"><svg class="" width="17" height="17" viewBox="0 0 16 16" style="" fill="none"><path d="M6 3.500L10.500 8 6 12.500" stroke="#b4b8bf" stroke-width="1.100" stroke-linecap="round" stroke-linejoin="round"/></svg></div><div class="ic" style="left:207px;top:4.500px"><svg class="" width="20" height="20" viewBox="0 0 16 16" style="" fill="none"><path d="M1.5 3.6c0-.6.5-1.1 1.1-1.1h3.1c.3 0 .6.1.8.4l1 1.1c.2.2.5.4.8.4h5.1c.6 0 1.1.5 1.1 1.1v6.9c0 .6-.5 1.1-1.1 1.1H2.6c-.6 0-1.1-.5-1.1-1.1z" fill="#43454a" stroke="#ced0d6" stroke-width="1"/><circle cx="6" cy="9" r="1.3" stroke="#ced0d6" stroke-width="1"/></svg></div><div class="tx" style="left:231px">components</div></div>
<div class="row" style="top:360px"><div class="ch" style="left:181.5px;top:6.5px"><svg class="" width="17" height="17" viewBox="0 0 16 16" style="" fill="none"><path d="M6 3.500L10.500 8 6 12.500" stroke="#b4b8bf" stroke-width="1.100" stroke-linecap="round" stroke-linejoin="round"/></svg></div><div class="ic" style="left:207px;top:4.500px"><svg class="" width="20" height="20" viewBox="0 0 16 16" style="" fill="none"><path d="M1.5 3.6c0-.6.5-1.1 1.1-1.1h3.1c.3 0 .6.1.8.4l1 1.1c.2.2.5.4.8.4h5.1c.6 0 1.1.5 1.1 1.1v6.9c0 .6-.5 1.1-1.1 1.1H2.6c-.6 0-1.1-.5-1.1-1.1z" fill="#43454a" stroke="#ced0d6" stroke-width="1"/><circle cx="6" cy="9" r="1.3" stroke="#ced0d6" stroke-width="1"/></svg></div><div class="tx" style="left:231px">home</div></div>
<div class="row" style="top:390px"><div class="ch" style="left:181.5px;top:6.5px"><svg class="" width="17" height="17" viewBox="0 0 16 16" style="" fill="none"><path d="M6 3.500L10.500 8 6 12.500" stroke="#b4b8bf" stroke-width="1.100" stroke-linecap="round" stroke-linejoin="round"/></svg></div><div class="ic" style="left:207px;top:4.500px"><svg class="" width="20" height="20" viewBox="0 0 16 16" style="" fill="none"><path d="M1.5 3.6c0-.6.5-1.1 1.1-1.1h3.1c.3 0 .6.1.8.4l1 1.1c.2.2.5.4.8.4h5.1c.6 0 1.1.5 1.1 1.1v6.9c0 .6-.5 1.1-1.1 1.1H2.6c-.6 0-1.1-.5-1.1-1.1z" fill="#43454a" stroke="#ced0d6" stroke-width="1"/><circle cx="6" cy="9" r="1.3" stroke="#ced0d6" stroke-width="1"/></svg></div><div class="tx" style="left:231px">snackdetail</div></div>
<div class="row" style="top:420px"><div class="ch" style="left:181.5px;top:6.5px"><svg class="" width="17" height="17" viewBox="0 0 16 16" style="" fill="none"><path d="M6 3.500L10.500 8 6 12.500" stroke="#b4b8bf" stroke-width="1.100" stroke-linecap="round" stroke-linejoin="round"/></svg></div><div class="ic" style="left:207px;top:4.500px"><svg class="" width="20" height="20" viewBox="0 0 16 16" style="" fill="none"><path d="M1.5 3.6c0-.6.5-1.1 1.1-1.1h3.1c.3 0 .6.1.8.4l1 1.1c.2.2.5.4.8.4h5.1c.6 0 1.1.5 1.1 1.1v6.9c0 .6-.5 1.1-1.1 1.1H2.6c-.6 0-1.1-.5-1.1-1.1z" fill="#43454a" stroke="#ced0d6" stroke-width="1"/><circle cx="6" cy="9" r="1.3" stroke="#ced0d6" stroke-width="1"/></svg></div><div class="tx" style="left:231px">theme</div></div>
<div class="row" style="top:450px"><div class="ch" style="left:181.5px;top:6.5px"><svg class="" width="17" height="17" viewBox="0 0 16 16" style="" fill="none"><path d="M6 3.500L10.500 8 6 12.500" stroke="#b4b8bf" stroke-width="1.100" stroke-linecap="round" stroke-linejoin="round"/></svg></div><div class="ic" style="left:207px;top:4.500px"><svg class="" width="20" height="20" viewBox="0 0 16 16" style="" fill="none"><path d="M1.5 3.6c0-.6.5-1.1 1.1-1.1h3.1c.3 0 .6.1.8.4l1 1.1c.2.2.5.4.8.4h5.1c.6 0 1.1.5 1.1 1.1v6.9c0 .6-.5 1.1-1.1 1.1H2.6c-.6 0-1.1-.5-1.1-1.1z" fill="#43454a" stroke="#ced0d6" stroke-width="1"/><circle cx="6" cy="9" r="1.3" stroke="#ced0d6" stroke-width="1"/></svg></div><div class="tx" style="left:231px">utils</div></div>
<div class="row" style="top:480px"><div class="ic" style="left:207px;top:4.500px"><svg class="" width="20" height="20" viewBox="0 0 16 16" style="" fill="none"><path d="M13.3 6.4A6.3 6.3 0 1 0 7 13.9" stroke="#548af7" stroke-width="1.1" fill="#25324d"/><path d="M9.6 6.2A3 3 0 1 0 9.4 10" stroke="#548af7" stroke-width="1.1" stroke-linecap="round"/><path d="M9.5 9.5h6L12.6 12.5l2.9 3h-6z" fill="#2f2936" stroke="#b589ec" stroke-width="1.1" stroke-linejoin="round"/></svg></div><div class="tx" style="left:231px">JetsnackApplication</div></div>
<div class="row" style="top:510px"><div class="abs" style="left:15px;top:0;width:427px;height:30px;border-radius:6px;background:#43454a"></div><div class="ic" style="left:207px;top:4.500px"><svg class="" width="21" height="21" viewBox="0 0 16 16" style="" fill="none"><path d="M2.5 2.5h11L8.2 8l5.3 5.5h-11z" fill="#2f2936" stroke="#b589ec" stroke-width="1.1" stroke-linejoin="round"/></svg></div><div class="tx" style="left:231px">JetsnackAppState.kt</div></div>
<div class="row" style="top:540px"><div class="ic" style="left:207px;top:4.500px"><svg class="" width="21" height="21" viewBox="0 0 16 16" style="" fill="none"><path d="M2.5 2.5h11L8.2 8l5.3 5.5h-11z" fill="#2f2936" stroke="#b589ec" stroke-width="1.1" stroke-linejoin="round"/></svg></div><div class="tx" style="left:231px">JetsnackMain.kt</div></div>
<div class="row" style="top:570px"><div class="ic" style="left:207px;top:4.500px"><svg class="" width="20" height="20" viewBox="0 0 16 16" style="" fill="none"><path d="M13.3 6.4A6.3 6.3 0 1 0 7 13.9" stroke="#548af7" stroke-width="1.1" fill="#25324d"/><path d="M9.6 6.2A3 3 0 1 0 9.4 10" stroke="#548af7" stroke-width="1.1" stroke-linecap="round"/><path d="M9.5 9.5h6L12.6 12.5l2.9 3h-6z" fill="#2f2936" stroke="#b589ec" stroke-width="1.1" stroke-linejoin="round"/></svg></div><div class="tx" style="left:231px">MainActivity</div></div>
<div class="row" style="top:600px"><div class="ch" style="left:109.5px;top:6.5px"><svg class="" width="17" height="17" viewBox="0 0 16 16" style="" fill="none"><path d="M6 3.500L10.500 8 6 12.500" stroke="#b4b8bf" stroke-width="1.100" stroke-linecap="round" stroke-linejoin="round"/></svg></div><div class="ic" style="left:135px;top:4.500px"><svg class="" width="20" height="20" viewBox="0 0 16 16" style="" fill="none"><path d="M9 13.5H2.6c-.6 0-1.1-.5-1.1-1.1V3.6c0-.6.5-1.1 1.1-1.1h3.1c.3 0 .6.1.8.4l1 1.1c.2.2.5.4.8.4h5.1c.6 0 1.1.5 1.1 1.1V8.2" fill="#43454a" stroke="#ced0d6" stroke-width="1" stroke-linecap="round"/><path d="M10.5 10.5h5M10.5 12.5h5M10.5 14.5h5" stroke="#f2c55c" stroke-width="1.1"/></svg></div><div class="tx" style="left:159px">res</div></div>
<div class="row" style="top:630px"><div class="ic" style="left:135px;top:4.500px"><svg class="" width="20" height="20" viewBox="0 0 16 16" style="" fill="none"><rect x="1.5" y="1.5" width="13" height="13" rx="2" fill="#1f3629" stroke="#45b86b" stroke-width="1.1"/><text x="8" y="11.500" font-family="Liberation Sans, sans-serif" font-size="9.800" font-weight="400" text-anchor="middle" fill="#4fc274">M</text></svg></div><div class="tx" style="left:159px">AndroidManifest.xml</div></div>
<div class="row" style="top:660px"><div class="ch" style="left:85.5px;top:6.5px"><svg class="" width="17" height="17" viewBox="0 0 16 16" style="" fill="none"><path d="M6 3.500L10.500 8 6 12.500" stroke="#b4b8bf" stroke-width="1.100" stroke-linecap="round" stroke-linejoin="round"/></svg></div><div class="ic" style="left:111px;top:4.500px"><svg class="" width="20" height="20" viewBox="0 0 16 16" style="" fill="none"><path d="M1.5 3.6c0-.6.5-1.1 1.1-1.1h3.1c.3 0 .6.1.8.4l1 1.1c.2.2.5.4.8.4h5.1c.6 0 1.1.5 1.1 1.1v6.9c0 .6-.5 1.1-1.1 1.1H2.6c-.6 0-1.1-.5-1.1-1.1z" fill="#43454a" stroke="#ced0d6" stroke-width="1"/></svg></div><div class="tx" style="left:135px">release</div></div>
<div class="row" style="top:690px"><div class="ic" style="left:87px;top:4.500px"><svg class="" width="20" height="20" viewBox="0 0 16 16" style="" fill="none"><circle cx="8" cy="8" r="6.3" fill="#3c3e43" stroke="#ced0d6" stroke-width="1"/><path d="M12.4 3.6L3.6 12.4" stroke="#ced0d6" stroke-width="1"/></svg></div><div class="tx" style="left:111px">.gitignore</div></div>
<div class="row" style="top:720px"><div class="ic" style="left:87px;top:4.500px"><svg class="" width="20" height="20" viewBox="0 0 16 16" style="" fill="none"><path d="M.7 11.8C.2 7.500 2 4.600 4.500 3.800 7 3 9.500 3.600 11.300 4.600c1.300.7 2.600.4 3-.6.400-1.100-.4-2.200-1.600-2.200-.7 0-1.200.3-1.400.6M13.500 1.900c1.500.4 2.300 1.700 2.100 3.100-.3 1.700-1.300 2.800-2.600 3.100M2.800 6.400C3 8 4.600 9 6 8.400c1-.4 1.700-1 1.900-1.500M.7 11.800c.7 1 1.700.8 2.200-.2.600 1 1.700 1 2.200 0 .6.900 1.700.8 2.500-.4" stroke="#ced0d6" stroke-width="1" stroke-linecap="round" stroke-linejoin="round"/><circle cx="9.900" cy="6.400" r=".65" fill="#ced0d6"/><path d="M9.300 9.800h6.200L12.500 12.700l3 3h-6.200z" fill="#2f2936" stroke="#b589ec" stroke-width="1.100" stroke-linejoin="round"/></svg></div><div class="tx" style="left:111px">build.gradle.kts</div></div>
<div class="row" style="top:750px"><div class="ic" style="left:87px;top:4.500px"><svg class="" width="20" height="20" viewBox="0 0 16 16" style="" fill="none"><path d="M2 3.5h12M2 6.500h8M2 9.500h12M2 12.500h6.500" stroke="#ced0d6" stroke-width="1"/></svg></div><div class="tx" style="left:111px">proguard-rules.pro</div></div>
<div class="row" style="top:780px"><div class="ch" style="left:37.5px;top:6.5px"><svg class="" width="17" height="17" viewBox="0 0 16 16" style="" fill="none"><path d="M3.500 6L8 10.500 12.500 6" stroke="#b4b8bf" stroke-width="1.100" stroke-linecap="round" stroke-linejoin="round"/></svg></div><div class="ic" style="left:63px;top:4.500px"><svg class="" width="20" height="20" viewBox="0 0 16 16" style="" fill="none"><path d="M1.5 3.6c0-.6.5-1.1 1.1-1.1h3.1c.3 0 .6.1.8.4l1 1.1c.2.2.5.4.8.4h5.1c.6 0 1.1.5 1.1 1.1v6.9c0 .6-.5 1.1-1.1 1.1H2.6c-.6 0-1.1-.5-1.1-1.1z" fill="#1f3629" stroke="#45b86b" stroke-width="1"/></svg></div><div class="tx bo" style="left:87px"><span class="b">baselineprofile</span></div></div>
<div class="row ex" style="top:810px"><div class="ch" style="left:61.5px;top:6.5px"><svg class="" width="17" height="17" viewBox="0 0 16 16" style="" fill="none"><path d="M6 3.500L10.500 8 6 12.500" stroke="#b4b8bf" stroke-width="1.100" stroke-linecap="round" stroke-linejoin="round"/></svg></div><div class="ic" style="left:87px;top:4.500px"><svg class="" width="20" height="20" viewBox="0 0 16 16" style="" fill="none"><path d="M1.5 3.6c0-.6.5-1.1 1.1-1.1h3.1c.3 0 .6.1.8.4l1 1.1c.2.2.5.4.8.4h5.1c.6 0 1.1.5 1.1 1.1v6.9c0 .6-.5 1.1-1.1 1.1H2.6c-.6 0-1.1-.5-1.1-1.1z" fill="#45322b" stroke="#c77d55" stroke-width="1"/></svg></div><div class="tx" style="left:111px">build</div></div>
<div class="row" style="top:840px"><div class="ch" style="left:61.5px;top:6.5px"><svg class="" width="17" height="17" viewBox="0 0 16 16" style="" fill="none"><path d="M6 3.500L10.500 8 6 12.500" stroke="#b4b8bf" stroke-width="1.100" stroke-linecap="round" stroke-linejoin="round"/></svg></div><div class="ic" style="left:87px;top:4.500px"><svg class="" width="20" height="20" viewBox="0 0 16 16" style="" fill="none"><path d="M1.5 3.6c0-.6.5-1.1 1.1-1.1h3.1c.3 0 .6.1.8.4l1 1.1c.2.2.5.4.8.4h5.1c.6 0 1.1.5 1.1 1.1v6.9c0 .6-.5 1.1-1.1 1.1H2.6c-.6 0-1.1-.5-1.1-1.1z" fill="#1f3629" stroke="#45b86b" stroke-width="1"/></svg></div><div class="tx" style="left:111px">src <span class="b">[main]</span></div></div>
<div class="row" style="top:870px"><div class="ic" style="left:87px;top:4.500px"><svg class="" width="20" height="20" viewBox="0 0 16 16" style="" fill="none"><circle cx="8" cy="8" r="6.3" fill="#3c3e43" stroke="#ced0d6" stroke-width="1"/><path d="M12.4 3.6L3.6 12.4" stroke="#ced0d6" stroke-width="1"/></svg></div><div class="tx" style="left:111px">.gitignore</div></div>
<div class="row" style="top:900px"><div class="ic" style="left:87px;top:4.500px"><svg class="" width="20" height="20" viewBox="0 0 16 16" style="" fill="none"><path d="M.7 11.8C.2 7.500 2 4.600 4.500 3.800 7 3 9.500 3.600 11.300 4.600c1.300.7 2.600.4 3-.6.400-1.100-.4-2.200-1.600-2.200-.7 0-1.200.3-1.400.6M13.500 1.900c1.500.4 2.300 1.700 2.100 3.100-.3 1.700-1.300 2.800-2.600 3.100M2.800 6.400C3 8 4.600 9 6 8.400c1-.4 1.700-1 1.900-1.500M.7 11.800c.7 1 1.700.8 2.200-.2.600 1 1.700 1 2.200 0 .6.900 1.700.8 2.500-.4" stroke="#ced0d6" stroke-width="1" stroke-linecap="round" stroke-linejoin="round"/><circle cx="9.900" cy="6.400" r=".65" fill="#ced0d6"/><path d="M9.300 9.800h6.200L12.500 12.700l3 3h-6.200z" fill="#2f2936" stroke="#b589ec" stroke-width="1.100" stroke-linejoin="round"/></svg></div><div class="tx" style="left:111px">build.gradle.kts</div></div>
<div class="row" style="top:930px"><div class="ch" style="left:37.5px;top:6.5px"><svg class="" width="17" height="17" viewBox="0 0 16 16" style="" fill="none"><path d="M6 3.500L10.500 8 6 12.500" stroke="#b4b8bf" stroke-width="1.100" stroke-linecap="round" stroke-linejoin="round"/></svg></div><div class="ic" style="left:63px;top:4.500px"><svg class="" width="20" height="20" viewBox="0 0 16 16" style="" fill="none"><path d="M1.5 3.6c0-.6.5-1.1 1.1-1.1h3.1c.3 0 .6.1.8.4l1 1.1c.2.2.5.4.8.4h5.1c.6 0 1.1.5 1.1 1.1v6.9c0 .6-.5 1.1-1.1 1.1H2.6c-.6 0-1.1-.5-1.1-1.1z" fill="#43454a" stroke="#ced0d6" stroke-width="1"/></svg></div><div class="tx" style="left:87px">gradle</div></div>
<div class="row" style="top:960px"><div class="ch" style="left:37.5px;top:6.5px"><svg class="" width="17" height="17" viewBox="0 0 16 16" style="" fill="none"><path d="M6 3.500L10.500 8 6 12.500" stroke="#b4b8bf" stroke-width="1.100" stroke-linecap="round" stroke-linejoin="round"/></svg></div><div class="ic" style="left:63px;top:4.500px"><svg class="" width="20" height="20" viewBox="0 0 16 16" style="" fill="none"><path d="M1.5 3.6c0-.6.5-1.1 1.1-1.1h3.1c.3 0 .6.1.8.4l1 1.1c.2.2.5.4.8.4h5.1c.6 0 1.1.5 1.1 1.1v6.9c0 .6-.5 1.1-1.1 1.1H2.6c-.6 0-1.1-.5-1.1-1.1z" fill="#43454a" stroke="#ced0d6" stroke-width="1"/></svg></div><div class="tx" style="left:87px">screenshots</div></div>
<div class="row" style="top:990px"><div class="ch" style="left:37.5px;top:6.5px"><svg class="" width="17" height="17" viewBox="0 0 16 16" style="" fill="none"><path d="M6 3.500L10.500 8 6 12.500" stroke="#b4b8bf" stroke-width="1.100" stroke-linecap="round" stroke-linejoin="round"/></svg></div><div class="ic" style="left:63px;top:4.500px"><svg class="" width="20" height="20" viewBox="0 0 16 16" style="" fill="none"><path d="M1.5 3.6c0-.6.5-1.1 1.1-1.1h3.1c.3 0 .6.1.8.4l1 1.1c.2.2.5.4.8.4h5.1c.6 0 1.1.5 1.1 1.1v6.9c0 .6-.5 1.1-1.1 1.1H2.6c-.6 0-1.1-.5-1.1-1.1z" fill="#43454a" stroke="#ced0d6" stroke-width="1"/></svg></div><div class="tx" style="left:87px">spotless</div></div>
<div class="row" style="top:1020px"><div class="ic" style="left:63px;top:4.500px"><svg class="" width="20" height="20" viewBox="0 0 16 16" style="" fill="none"><path d="M2 3.5h12M2 6.500h8M2 9.500h12M2 12.500h6.500" stroke="#ced0d6" stroke-width="1"/></svg></div><div class="tx" style="left:87px"><span style="letter-spacing:-1.050px">ASSETS_LICENSE</span></div></div>
<div class="row" style="top:1050px"><div class="ic" style="left:63px;top:4.500px"><svg class="" width="20" height="20" viewBox="0 0 16 16" style="" fill="none"><path d="M.7 11.8C.2 7.500 2 4.600 4.500 3.800 7 3 9.500 3.600 11.300 4.600c1.300.7 2.600.4 3-.6.400-1.100-.4-2.200-1.600-2.200-.7 0-1.200.3-1.400.6M13.500 1.900c1.500.4 2.300 1.700 2.100 3.100-.3 1.700-1.300 2.800-2.600 3.100M2.800 6.400C3 8 4.600 9 6 8.400c1-.4 1.700-1 1.900-1.500M.7 11.800c.7 1 1.700.8 2.200-.2.600 1 1.700 1 2.200 0 .6.900 1.700.8 2.500-.4" stroke="#ced0d6" stroke-width="1" stroke-linecap="round" stroke-linejoin="round"/><circle cx="9.900" cy="6.400" r=".65" fill="#ced0d6"/><path d="M9.300 9.800h6.200L12.500 12.700l3 3h-6.200z" fill="#2f2936" stroke="#b589ec" stroke-width="1.100" stroke-linejoin="round"/></svg></div><div class="tx" style="left:87px">build.gradle.kts</div></div>
<div class="row" style="top:1080px"><div class="ic" style="left:63px;top:4.500px"><svg class="" width="20" height="20" viewBox="0 0 16 16" style="" fill="none"><path d="M3 1.500h6.500L13 5v9.500H3z" fill="#f0f1f2"/></svg></div><div class="tx" style="left:83px">debug.keystore</div></div>
<div class="row" style="top:1110px"><div class="ic" style="left:63px;top:4.500px"><svg class="" width="21" height="21" viewBox="0 0 16 16" style="" fill="none"><path d="M12.96 6.81 L14.55 7.17 L14.55 8.83 L12.96 9.19 L12.35 10.66 L13.22 12.05 L12.05 13.22 L10.66 12.35 L9.19 12.96 L8.83 14.55 L7.17 14.55 L6.81 12.96 L5.34 12.35 L3.95 13.22 L2.78 12.05 L3.65 10.66 L3.04 9.19 L1.45 8.83 L1.45 7.17 L3.04 6.81 L3.65 5.34 L2.78 3.95 L3.95 2.78 L5.34 3.65 L6.81 3.04 L7.17 1.45 L8.83 1.45 L9.19 3.04 L10.66 3.65 L12.05 2.78 L13.22 3.95 L12.35 5.34Z" stroke="#ced0d6" stroke-width="1" stroke-linejoin="round"/><circle cx="8" cy="8" r="2.100" stroke="#ced0d6" stroke-width="1"/></svg></div><div class="tx" style="left:87px">gradle.properties</div></div>
<div class="row" style="top:1140px"><div class="ic" style="left:63px;top:4.500px"><svg class="" width="20" height="20" viewBox="0 0 16 16" style="" fill="none"><rect x="1.500" y="2.500" width="13" height="11" rx="1" fill="#868a91"/><path d="M5 5.800L7.400 8 5 10.200" stroke="#2b2d30" stroke-width="1.300" stroke-linecap="round" stroke-linejoin="round"/></svg></div><div class="tx" style="left:87px">gradlew</div></div>
<div class="row" style="top:1170px"><div class="ic" style="left:63px;top:4.500px"><svg class="" width="20" height="20" viewBox="0 0 16 16" style="" fill="none"><path d="M2 3.5h12M2 6.500h8M2 9.500h12M2 12.500h6.500" stroke="#ced0d6" stroke-width="1"/></svg></div><div class="tx" style="left:87px">gradlew.bat</div></div>
<div class="row" style="top:1200px"><div class="ic" style="left:63px;top:4.500px"><svg class="" width="21" height="21" viewBox="0 0 16 16" style="" fill="none"><path d="M12.96 6.81 L14.55 7.17 L14.55 8.83 L12.96 9.19 L12.35 10.66 L13.22 12.05 L12.05 13.22 L10.66 12.35 L9.19 12.96 L8.83 14.55 L7.17 14.55 L6.81 12.96 L5.34 12.35 L3.95 13.22 L2.78 12.05 L3.65 10.66 L3.04 9.19 L1.45 8.83 L1.45 7.17 L3.04 6.81 L3.65 5.34 L2.78 3.95 L3.95 2.78 L5.34 3.65 L6.81 3.04 L7.17 1.45 L8.83 1.45 L9.19 3.04 L10.66 3.65 L12.05 2.78 L13.22 3.95 L12.35 5.34Z" stroke="#ced0d6" stroke-width="1" stroke-linejoin="round"/><circle cx="8" cy="8" r="2.100" stroke="#ced0d6" stroke-width="1"/></svg></div><div class="tx" style="left:87px">local.properties</div></div>
<div class="row" style="top:1230px"><div class="ic" style="left:63px;top:4.500px"><svg class="" width="20" height="20" viewBox="0 0 16 16" style="" fill="none"><path d="M.7 11.8C.2 7.500 2 4.600 4.500 3.800 7 3 9.500 3.600 11.300 4.600c1.300.7 2.600.4 3-.6.400-1.100-.4-2.200-1.600-2.200-.7 0-1.200.3-1.400.6M13.500 1.900c1.500.4 2.300 1.700 2.100 3.100-.3 1.700-1.300 2.800-2.600 3.100M2.800 6.400C3 8 4.600 9 6 8.400c1-.4 1.700-1 1.900-1.500M.7 11.800c.7 1 1.700.8 2.200-.2.600 1 1.700 1 2.200 0 .6.900 1.700.8 2.500-.4M7.600 11.200c.9 1.200 1.900 1.200 2.500.3.600 1 1.800.9 2.300-.1.400-1 .4-2.400.6-3.300" stroke="#ced0d6" stroke-width="1" stroke-linecap="round" stroke-linejoin="round"/><circle cx="9.900" cy="6.400" r=".65" fill="#ced0d6"/></svg></div><div class="tx" style="left:87px">settings.gradle</div></div>
</div>
<div class="abs" style="left:506px;top:108px;width:12px;height:1157px;border-radius:6px;background:#4f5053"></div>
<div class="abs" style="left:49px;top:1365px;width:199px;height:11px;border-radius:6px;background:#4d4e51"></div>
<div class="abs" style="left:520px;top:52px;width:2px;height:1326px;background:#1e1f22"></div>
<div class="abs" style="left:522px;top:52px;width:1060px;height:1326px;background:#1e1f22"></div>
<div class="abs" style="left:551px;top:68px"><svg class="" width="20" height="20" viewBox="0 0 16 16" style="" fill="none"><path d="M2.5 2.5h11L8.2 8l5.3 5.5h-11z" fill="#2f2936" stroke="#b589ec" stroke-width="1.1" stroke-linejoin="round"/></svg></div><div class="abs" style="left:576px;top:67px;line-height:24px;color:#b4b8bf;white-space:pre">BaselineProfileGenerator.kt</div>
<div class="abs" style="left:835px;top:68px"><svg class="" width="20" height="20" viewBox="0 0 16 16" style="" fill="none"><path d="M.7 11.8C.2 7.500 2 4.600 4.500 3.800 7 3 9.500 3.600 11.300 4.600c1.300.7 2.600.4 3-.6.400-1.100-.4-2.200-1.600-2.200-.7 0-1.200.3-1.400.6M13.500 1.900c1.500.4 2.300 1.700 2.100 3.100-.3 1.700-1.300 2.800-2.600 3.100M2.800 6.400C3 8 4.600 9 6 8.400c1-.4 1.700-1 1.900-1.500M.7 11.800c.7 1 1.700.8 2.200-.2.600 1 1.700 1 2.200 0 .6.900 1.700.8 2.500-.4" stroke="#ced0d6" stroke-width="1" stroke-linecap="round" stroke-linejoin="round"/><circle cx="9.900" cy="6.400" r=".65" fill="#ced0d6"/><path d="M9.300 9.800h6.200L12.500 12.700l3 3h-6.200z" fill="#2f2936" stroke="#b589ec" stroke-width="1.100" stroke-linejoin="round"/></svg></div><div class="abs" style="left:860px;top:67px;line-height:24px;color:#b4b8bf;white-space:pre">build.gradle.kts (:baselineprofile)</div>
<div class="abs" style="left:1160px;top:68px"><svg class="" width="20" height="20" viewBox="0 0 16 16" style="" fill="none"><path d="M2.5 2.5h11L8.2 8l5.3 5.5h-11z" fill="#2f2936" stroke="#b589ec" stroke-width="1.1" stroke-linejoin="round"/></svg></div><div class="abs" style="left:1185px;top:67px;line-height:24px;color:#dfe1e5;white-space:pre">JetsnackAppState.kt</div>
<div class="abs" style="left:1354px;top:69px"><svg class="" width="17" height="17" viewBox="0 0 16 16" style="" fill="none"><path d="M4.500 4.500l7 7M11.500 4.500l-7 7" stroke="#868a91" stroke-width="1" stroke-linecap="round"/></svg></div>
<div class="abs" style="left:1146px;top:100px;width:235px;height:4px;border-radius:2px;background:#3574f0"></div>
<div class="abs" style="left:522px;top:103px;width:1060px;height:1px;background:#2f3134"></div>
<div class="abs" style="left:1395px;top:67px"><svg class="" width="21" height="21" viewBox="0 0 16 16" style="" fill="none"><path d="M3.500 6L8 10.500 12.500 6" stroke="#ced0d6" stroke-width="1.100" stroke-linecap="round" stroke-linejoin="round"/></svg></div>
<div class="abs" style="left:1425px;top:64px;width:30px;height:28px;border-radius:5px;background:#4e5157"></div>
<div class="abs" style="left:1430px;top:68px"><svg class="" width="20" height="20" viewBox="0 0 16 16" style="" fill="none"><path d="M2.500 3.500h11M2.500 6.500h11M2.500 9.500h11M2.500 12.500h11" stroke="#dfe1e5" stroke-width="1.100"/></svg></div>
<div class="abs" style="left:1465px;top:68px"><svg class="" width="21" height="21" viewBox="0 0 16 16" style="" fill="none"><path d="M1.500 3.500h6M1.500 6.500h4M1.500 9.500h6M1.500 12.500h4" stroke="#ced0d6" stroke-width="1.100"/><rect x="10" y="2.500" width="4.500" height="11" rx="1" stroke="#ced0d6" stroke-width="1.100"/></svg></div>
<div class="abs" style="left:1501px;top:68px"><svg class="" width="21" height="21" viewBox="0 0 16 16" style="" fill="none"><rect x="2" y="2.500" width="12" height="11" rx="1.500" stroke="#ced0d6" stroke-width="1.100"/><path d="M2 11l4-4 3 3M14 3L6 13.500" stroke="#ced0d6" stroke-width="1"/><circle cx="10.500" cy="6" r="1.200" stroke="#ced0d6" stroke-width="1"/></svg></div>
<div class="abs" style="left:1534px;top:66px;width:1px;height:24px;background:#43454a"></div>
<div class="abs" style="left:1546px;top:67px"><svg class="" width="22" height="22" viewBox="0 0 16 16" style="" fill="none"><circle cx="8" cy="3.500" r="1.100" fill="#ced0d6"/><circle cx="8" cy="8" r="1.100" fill="#ced0d6"/><circle cx="8" cy="12.500" r="1.100" fill="#ced0d6"/></svg></div>
<div class="abs" style="left:0;top:104px;width:1582px;height:1274px;overflow:hidden"><div class="abs" style="left:0;top:-104px;width:1582px;height:1412px">
<div class="abs" style="left:608px;top:104px;width:1px;height:1274px;background:#313438"></div>
<div class="abs" style="left:1411px;top:104px;width:1px;height:1274px;background:#2d2f33"></div>
<div class="guide" style="left:648px;top:713.5px;height:27.0px"></div>
<div class="guide" style="left:648px;top:1145.5px;height:270.0px"></div>
<div class="guide" style="left:688px;top:1172.5px;height:243.0px"></div>
<div class="guide" style="left:728px;top:1199.5px;height:216.0px"></div>
<div class="guide" style="left:768px;top:1226.5px;height:189.0px"></div>
<div class="ln" style="top:93.5px">39</div>
<div class="cl" style="top:93.5px"><span class="k">import</span> kotlinx.coroutines.launch</div>
<div class="ln" style="top:120.5px">40</div>
<div class="ln" style="top:147.5px">41</div>
<div class="cl" style="top:147.5px"><span class="d">/**</span></div>
<div class="ln" style="top:174.5px">42</div>
<div class="cl" style="top:174.5px"><span class="d"> * Destinations used in the </span><span class="dl">[<span class="t">Jetsnack</span>Main]</span><span class="d">.</span></div>
<div class="ln" style="top:201.5px">43</div>
<div class="cl" style="top:201.5px"><span class="d"> */</span></div>
<div class="ln" style="top:228.5px">44</div>
<div class="cl" style="top:228.5px"><span class="k">object</span> MainDestinations {</div>
<div class="ln" style="top:255.5px">45</div>
<div class="cl" style="top:255.5px">    <span class="k">const val </span><span class="p">HOME_ROUTE</span> = <span class="s">"home"</span></div>
<div class="ln" style="top:282.5px">46</div>
<div class="cl" style="top:282.5px">    <span class="k">const val </span><span class="p">SNACK_DETAIL_ROUTE</span> = <span class="s">"snack"</span></div>
<div class="ln" style="top:309.5px">47</div>
<div class="cl" style="top:309.5px">    <span class="k">const val </span><span class="p">SNACK_ID_KEY</span> = <span class="s">"snackId"</span></div>
<div class="ln" style="top:336.5px">48</div>
<div class="cl" style="top:336.5px">}</div>
<div class="ln" style="top:363.5px">49</div>
<div class="ln" style="top:390.5px">50</div>
<div class="cl" style="top:390.5px"><span class="d">/**</span></div>
<div class="ln" style="top:417.5px">51</div>
<div class="cl" style="top:417.5px"><span class="d"> * Remembers and creates an instance of </span><span class="dl">[<span class="t">Jetsnack</span>AppState]</span></div>
<div class="ln" style="top:444.5px">52</div>
<div class="cl" style="top:444.5px"><span class="d"> */</span></div>
<div class="ln" style="top:471.5px">53</div>
<div class="cl" style="top:471.5px"><span class="a">@Composable</span></div>
<div class="ln" style="top:498.5px">54</div>
<div class="cl" style="top:498.5px"><span class="k">fun </span><span class="f">remember<span class="t">Jetsnack</span>AppState</span>(</div>
<div class="ln" style="top:525.5px">55</div>
<div class="cl" style="top:525.5px">    scaffoldState: ScaffoldState = <span class="g">rememberScaffoldState</span>(),</div>
<div class="ln" style="top:552.5px">56</div>
<div class="cl" style="top:552.5px">    navController: NavHostController = <span class="g">rememberNavController</span>(),</div>
<div class="ln" style="top:579.5px">57</div>
<div class="cl" style="top:579.5px">    <span class="t">snackbar</span>Manager: SnackbarManager = SnackbarManager,</div>
<div class="ln" style="top:606.5px">58</div>
<div class="cl" style="top:606.5px">    resources: Resources = <span class="g">resources</span>(),</div>
<div class="ln" style="top:633.5px">59</div>
<div class="cl" style="top:633.5px">    coroutineScope: CoroutineScope = <span class="g">rememberCoroutineScope</span>()</div>
<div class="ln" style="top:660.5px">60</div>
<div class="cl" style="top:660.5px">) =</div>
<div class="ln" style="top:687.5px">61</div>
<div class="cl" style="top:687.5px">    <span class="g">remember</span>(scaffoldState, navController, snackbarManager, resources, coroutineScope) {</div>
<div class="ln" style="top:714.5px">62</div>
<div class="cl" style="top:714.5px">        JetsnackAppState(scaffoldState, navController, snackbarManager, resources, coroutineScope)</div>
<div class="ln" style="top:741.5px">63</div>
<div class="cl" style="top:741.5px">    }</div>
<div class="ln" style="top:768.5px">64</div>
<div class="ln" style="top:795.5px">65</div>
<div class="cl" style="top:795.5px"><span class="d">/**</span></div>
<div class="ln" style="top:822.5px">66</div>
<div class="cl" style="top:822.5px"><span class="d"> * Responsible for holding state related to </span><span class="dl">[<span class="t">Jetsnack</span>Main]</span><span class="d"> and containing UI-related logic.</span></div>
<div class="ln" style="top:849.5px">67</div>
<div class="cl" style="top:849.5px"><span class="d"> */</span></div>
<div class="ln" style="top:876.5px">68</div>
<div class="cl" style="top:876.5px"><span class="a">@Stable</span></div>
<div class="ln" style="top:903.5px">69</div>
<div class="cl" style="top:903.5px"><span class="k">class </span><span class="t">Jetsnack</span>AppState(</div>
<div class="ln" style="top:930.5px">70</div>
<div class="cl" style="top:930.5px">    <span class="k">val </span><span class="p">scaffoldState</span>: ScaffoldState,</div>
<div class="ln" style="top:957.5px">71</div>
<div class="cl" style="top:957.5px">    <span class="k">val </span><span class="p">navController</span>: NavHostController,</div>
<div class="ln" style="top:984.5px">72</div>
<div class="cl" style="top:984.5px">    <span class="k">private val </span><span class="p"><span class="t">snackbar</span>Manager</span>: SnackbarManager,</div>
<div class="ln" style="top:1011.5px">73</div>
<div class="cl" style="top:1011.5px">    <span class="k">private val </span><span class="p">resources</span>: Resources,</div>
<div class="ln" style="top:1038.5px">74</div>
<div class="cl" style="top:1038.5px">    coroutineScope: CoroutineScope</div>
<div class="ln" style="top:1065.5px">75</div>
<div class="cl" style="top:1065.5px">) {</div>
<div class="ln" style="top:1092.5px">76</div>
<div class="cl" style="top:1092.5px">    <span class="c">// Process <span class="t">snackbars</span> coming from <span class="t">Snackbar</span>Manager</span></div>
<div class="ln" style="top:1119.5px">77</div>
<div class="cl" style="top:1119.5px">    <span class="k">init</span> {</div>
<div class="ln" style="top:1146.5px">78</div>
<div class="cl" style="top:1146.5px">        coroutineScope.<span class="e">launch</span> {<span class="hint">this: CoroutineScope</span></div>
<div class="ln" style="top:1173.5px">79</div>
<div class="cl" style="top:1173.5px">            <span class="p">snackbarManager</span>.<span class="p">messages</span>.collect { currentMessages -&gt;</div>
<div class="ln" style="top:1200.5px">80</div>
<div class="cl" style="top:1200.5px">                <span class="k">if</span> (currentMessages.<span class="e">isNotEmpty</span>()) {</div>
<div class="ln" style="top:1227.5px">81</div>
<div class="cl" style="top:1227.5px">                    <span class="k">val</span> message = currentMessages[<span class="n">0</span>]</div>
<div class="ln" style="top:1254.5px">82</div>
<div class="cl" style="top:1254.5px">                    <span class="k">val</span> text = <span class="p">resources</span>.getText(message.<span class="p">messageId</span>)</div>
<div class="ln" style="top:1281.5px">83</div>
<div class="ln" style="top:1308.5px">84</div>
<div class="cl" style="top:1308.5px">                    <span class="c">// Display the <span class="t">snackbar</span> on the screen. `show<span class="t">Snackbar</span>` is a function</span></div>
<div class="ln" style="top:1335.5px">85</div>
<div class="cl" style="top:1335.5px">                    <span class="c">// that suspends until the <span class="t">snackbar</span> disappears from the screen</span></div>
<div class="ln" style="top:1362.5px">86</div>
<div class="abs" style="left:571px;top:1177.5px"><svg class="" width="19" height="19" viewBox="0 0 16 16" style="" fill="none"><path d="M1.500 8.500h3" stroke="#ced0d6" stroke-width="1.100" stroke-linecap="round"/><path d="M6.500 2.500c2 1.500 2 4 .500 5.500s-1.500 4 .500 5.500" stroke="#57965c" stroke-width="1.200" stroke-linecap="round"/><path d="M8.500 8.500h4M10.500 5.500l3.500 3-3.500 3z" stroke="#ced0d6" stroke-width="1.100" fill="#ced0d6" stroke-linejoin="round"/></svg></div>
<div class="abs" style="left:571px;top:1366.5px"><svg class="" width="19" height="19" viewBox="0 0 16 16" style="" fill="none"><path d="M1.500 8.500h3" stroke="#ced0d6" stroke-width="1.100" stroke-linecap="round"/><path d="M6.500 2.500c2 1.500 2 4 .500 5.500s-1.500 4 .500 5.500" stroke="#57965c" stroke-width="1.200" stroke-linecap="round"/><path d="M8.500 8.500h4M10.500 5.500l3.500 3-3.500 3z" stroke="#ced0d6" stroke-width="1.100" fill="#ced0d6" stroke-linejoin="round"/></svg></div>
</div></div>
<div class="abs" style="left:1486px;top:112px"><svg class="" width="18" height="18" viewBox="0 0 16 16" style="" fill="none"><path d="M3 7.500l3 3 6.500-7" stroke="#57965c" stroke-width="2" stroke-linecap="round" stroke-linejoin="round"/><path d="M2 12.500l1.500 1.500 2-1.500 2 1.500 2-1.500 2 1.500 1.500-1.500" stroke="#57965c" stroke-width="1"/></svg></div>
<div class="abs" style="left:1507px;top:112px;font-size:14px;line-height:18px;color:#b4b8bf">14</div>
<div class="abs" style="left:1530px;top:112px"><svg class="" width="18" height="18" viewBox="0 0 16 16" style="" fill="none"><path d="M3.500 10L8 5.500 12.500 10" stroke="#b4b8bf" stroke-width="1.100" stroke-linecap="round" stroke-linejoin="round"/></svg></div>
<div class="abs" style="left:1557px;top:112px"><svg class="" width="18" height="18" viewBox="0 0 16 16" style="" fill="none"><path d="M3.500 6L8 10.500 12.500 6" stroke="#b4b8bf" stroke-width="1.100" stroke-linecap="round" stroke-linejoin="round"/></svg></div>
<div class="abs" style="left:1567px;top:409px;width:11px;height:316px;border-radius:6px 6px 2px 2px;background:#404145"></div>
<div class="abs" style="left:611px;top:1361px;width:971px;height:17px;background:#2a2b2e"></div>
<div class="abs" style="left:614px;top:1364px;width:587px;height:12px;border-radius:6px;background:#57585b"></div>
<div class="abs" style="left:1582px;top:52px;width:2px;height:1326px;background:#1e1f22"></div>
<div class="abs" style="left:1584px;top:52px;width:920px;height:1326px;background:#2b2d30"></div>
<div class="abs b" style="left:1602px;top:67px;line-height:22px;font-size:16px">Running Devices</div>
<div class="abs" style="left:1771.0px;top:67.0px"><svg class="" width="22" height="22" viewBox="0 0 16 16" style="" fill="none"><rect x="4.500" y="2" width="7" height="12" rx="1.200" stroke="#ced0d6" stroke-width="1.100"/><path d="M7 4h2" stroke="#ced0d6" stroke-width="1"/><circle cx="12.300" cy="13" r="2.100" fill="#1ed31e" stroke="#2b2d30" stroke-width=".7"/></svg></div>
<div class="abs" style="left:1796px;top:67px;line-height:24px;letter-spacing:-.15px">Pixel 5 API 33</div>
<div class="abs" style="left:1911.5px;top:69.5px"><svg class="" width="17" height="17" viewBox="0 0 16 16" style="" fill="none"><path d="M4.500 4.500l7 7M11.500 4.500l-7 7" stroke="#868a91" stroke-width="1" stroke-linecap="round"/></svg></div>
<div class="abs" style="left:1945.0px;top:67.5px"><svg class="" width="20" height="20" viewBox="0 0 16 16" style="" fill="none"><path d="M8 2v12M2 8h12" stroke="#ced0d6" stroke-width="1.100" stroke-linecap="round"/></svg></div>
<div class="abs" style="left:1757px;top:100px;width:182px;height:3.500px;border-radius:2px;background:#6f737a"></div>
<div class="abs" style="left:1584px;top:103px;width:920px;height:1px;background:#1e1f22"></div>
<div class="abs" style="left:1584px;top:146px;width:920px;height:1px;background:#222427"></div>
<div class="abs" style="left:2395.0px;top:66.0px"><svg class="" width="22" height="22" viewBox="0 0 16 16" style="" fill="none"><rect x="3" y="3" width="10" height="10" stroke="#ced0d6" stroke-width="1.100"/><path d="M3 4.500h10" stroke="#ced0d6" stroke-width="2.200"/></svg></div>
<div class="abs" style="left:2429.0px;top:66.0px"><svg class="" width="22" height="22" viewBox="0 0 16 16" style="" fill="none"><circle cx="8" cy="3.500" r="1.100" fill="#ced0d6"/><circle cx="8" cy="8" r="1.100" fill="#ced0d6"/><circle cx="8" cy="12.500" r="1.100" fill="#ced0d6"/></svg></div>
<div class="abs" style="left:2463.0px;top:66.0px"><svg class="" width="22" height="22" viewBox="0 0 16 16" style="" fill="none"><path d="M2 8h12" stroke="#ced0d6" stroke-width="1" stroke-linecap="round"/></svg></div>
<div class="abs" style="left:1601.25px;top:115.25px"><svg class="" width="19.5" height="19.5" viewBox="0 0 16 16" style="" fill="none"><path d="M5 4a5.500 5.500 0 1 0 6 0M8 1.500v6" stroke="#ced0d6" stroke-width="1.100" stroke-linecap="round"/></svg></div>
<div class="abs" style="left:1634.25px;top:115.25px"><svg class="" width="19.5" height="19.5" viewBox="0 0 16 16" style="" fill="none"><path d="M1.500 6v4h2.500l3.500 3V3L4 6zM10 5.500a3.500 3.500 0 0 1 0 5M12 3.500a6 6 0 0 1 0 9" stroke="#ced0d6" stroke-width="1.100" stroke-linejoin="round" stroke-linecap="round"/></svg></div>
<div class="abs" style="left:1667.25px;top:115.25px"><svg class="" width="19.5" height="19.5" viewBox="0 0 16 16" style="" fill="none"><path d="M2.500 6v4H5l3.500 3V3L5 6zM11 5.500a3.500 3.500 0 0 1 0 5" stroke="#ced0d6" stroke-width="1.100" stroke-linejoin="round" stroke-linecap="round"/></svg></div>
<div class="abs" style="left:1702.25px;top:115.25px"><svg class="" width="19.5" height="19.5" viewBox="0 0 16 16" style="" fill="none"><rect x="1.500" y="2.500" width="6" height="11" rx="1" stroke="#ced0d6" stroke-width="1.100"/><path d="M9.500 13.500h1.500M10.500 3.500c2.500.5 3.500 3 3 5.500-.3 1.500-1 3-2 4M9.500 2l1.200 1.600L9.500 5" stroke="#548af7" stroke-width="1.100" stroke-linecap="round" fill="none"/></svg></div>
<div class="abs" style="left:1737.25px;top:115.25px"><svg class="" width="19.5" height="19.5" viewBox="0 0 16 16" style="" fill="none"><rect x="8.500" y="2.500" width="6" height="11" rx="1" stroke="#ced0d6" stroke-width="1.100"/><path d="M6.500 13.500H5M5.500 3.500c-2.500.5-3.500 3-3 5.500.3 1.500 1 3 2 4M6.500 2L5.300 3.600 6.500 5" stroke="#548af7" stroke-width="1.100" stroke-linecap="round" fill="none"/></svg></div>
<div class="abs" style="left:1771.25px;top:115.25px"><svg class="" width="19.5" height="19.5" viewBox="0 0 16 16" style="" fill="none"><path d="M11 3.500v9L4 8z" stroke="#ced0d6" stroke-width="1.100" stroke-linejoin="round"/></svg></div>
<div class="abs" style="left:1805.25px;top:115.25px"><svg class="" width="19.5" height="19.5" viewBox="0 0 16 16" style="" fill="none"><circle cx="8" cy="8" r="4.800" stroke="#ced0d6" stroke-width="1.100"/></svg></div>
<div class="abs" style="left:1839.25px;top:115.25px"><svg class="" width="19.5" height="19.5" viewBox="0 0 16 16" style="" fill="none"><rect x="4" y="4" width="8" height="8" stroke="#ced0d6" stroke-width="1.100"/></svg></div>
<div class="abs" style="left:1872.75px;top:114.75px"><svg class="" width="20.5" height="20.5" viewBox="0 0 16 16" style="" fill="none"><path d="M1.500 5.500a1 1 0 0 1 1-1h2l1-1.500h5l1 1.500h2a1 1 0 0 1 1 1v6.500a1 1 0 0 1-1 1h-11a1 1 0 0 1-1-1z" stroke="#ced0d6" stroke-width="1.100" stroke-linejoin="round"/><circle cx="8" cy="8.500" r="2.500" stroke="#ced0d6" stroke-width="1.100"/></svg></div>
<div class="abs" style="left:1906.75px;top:114.75px"><svg class="" width="20.5" height="20.5" viewBox="0 0 16 16" style="" fill="none"><rect x="1.500" y="4" width="9" height="8" rx="1.200" stroke="#ced0d6" stroke-width="1.100"/><path d="M10.500 7l4-2.500v7l-4-2.500z" stroke="#ced0d6" stroke-width="1.100" stroke-linejoin="round"/></svg></div>
<div class="abs" style="left:1940.75px;top:114.75px"><svg class="" width="20.5" height="20.5" viewBox="0 0 16 16" style="" fill="none"><path d="M9 10.500H2.500a1 1 0 0 1-1-1v-6a1 1 0 0 1 1-1h10a1 1 0 0 1 1 1v3" stroke="#ced0d6" stroke-width="1.100"/><path d="M3.500 4.500h8M3.500 6.500h8M5 8.500h4" stroke="#ced0d6" stroke-width="1" stroke-dasharray="1 1"/><rect x="11" y="8" width="3.500" height="6.500" rx="1.700" stroke="#ced0d6" stroke-width="1.100" fill="#2b2d30"/><path d="M12.750 9.500v1.500" stroke="#ced0d6" stroke-width="1"/></svg></div>
<div class="abs" style="left:2394px;top:114px;font-size:15.200px;line-height:22px;color:#ced0d6">Up-to-date</div>
<div class="abs" style="left:2470.0px;top:115.0px"><svg class="" width="18" height="18" viewBox="0 0 16 16" style="" fill="none"><path d="M3 8.500l3.200 3L13 4" stroke="#57965c" stroke-width="2.200" stroke-linecap="round" stroke-linejoin="round"/></svg></div>
<div class="abs" style="left:2450px;top:1214px;width:34px;height:140px;border:1px solid #393b40;border-radius:5px"></div>
<div class="abs" style="left:2457.0px;top:1223.0px"><svg class="" width="20" height="20" viewBox="0 0 16 16" style="" fill="none"><path d="M8 2v12M2 8h12" stroke="#ced0d6" stroke-width="1" stroke-linecap="round"/></svg></div>
<div class="abs" style="left:2457.0px;top:1256.0px"><svg class="" width="20" height="20" viewBox="0 0 16 16" style="" fill="none"><path d="M2.500 8h11" stroke="#5a5d63" stroke-width="1" stroke-linecap="round"/></svg></div>
<div class="abs" style="left:2450px;top:1291px;width:34px;text-align:center;font-size:13px;font-weight:700;line-height:20px;color:#ced0d6">1:1</div>
<div class="abs" style="left:2457.0px;top:1325.0px"><svg class="" width="20" height="20" viewBox="0 0 16 16" style="" fill="none"><rect x="2.500" y="3" width="11" height="10" rx="1.500" stroke="#5a5d63" stroke-width="1"/><path d="M5 8V5.500h3M11 8v2.500H8" stroke="#5a5d63" stroke-width="1"/></svg></div>
<div class="ph">
<div class="abs" style="left:89px;top:25px;font-weight:700;font-size:17.500px;line-height:24px;color:#fff;letter-spacing:.3px">4:17</div>
<div class="abs" style="left:463px;top:28px"><svg class="" width="22" height="22" viewBox="0 0 24 22" style="" fill="none"><path d="M1 6.500C4 3.500 8 2.500 12 2.500s8 1 11 4L12 19.500z" fill="#fff"/></svg></div>
<div class="abs" style="left:489px;top:28px"><svg class="" width="21" height="21" viewBox="0 0 21 21" style="" fill="none"><path d="M19 2v17H2z" fill="#fff"/></svg></div>
<div class="abs" style="left:512px;top:27px"><svg class="" width="22" height="22" viewBox="0 0 18 22" style="" fill="none"><path d="M7 2h4v2h2.500v16h-9V4H7z" fill="#fff"/><path d="M10 7l-2.500 5h2v4l2.500-5h-2z" fill="#121212"/></svg></div>
<div class="abs dj" style="left:36px;top:94px;font-size:23.800px;-webkit-text-stroke:.8px #fff;line-height:40px;color:#fff;white-space:pre">Delivery to 1600 Amphitheater Way</div>
<div class="abs" style="left:515px;top:100px"><svg class="" width="26" height="26" viewBox="0 0 24 24" style="" fill="none"><path d="M6 9l6 6 6-6" stroke="#ded6fe" stroke-width="2.400" fill="none"/></svg></div>
<div class="dv" style="top:153px;height:1px;background:#333"></div>
<div class="abs" style="left:35px;top:176px;width:34px;height:34px;border-radius:50%;background:linear-gradient(90deg,#56d7f0,#b8a9f5)"><div class="abs" style="left:3px;top:3px;width:28px;height:28px;border-radius:50%;background:#121212"></div></div>
<div class="abs" style="left:35px;top:176px"><svg class="" width="34" height="34" viewBox="0 0 24 24" style="" fill="none"><path d="M3.500 7.300h17M7 12.300h10M10.300 17h3.400" stroke="#ded6fe" stroke-width="1.800"/></svg></div>
<div class="chip" style="left:99px;width:127px"><i></i><b>Organic</b></div>
<div class="chip" style="left:238px;width:158px"><i></i><b>Gluten-free</b></div>
<div class="chip" style="left:408px;width:146px"><i></i><b>Dairy-free</b></div>
<div class="chip" style="left:566px;width:120px"><i></i><b>Vegan</b></div>
<div class="h" style="top:256px;letter-spacing:.35px">Android&#39;s picks</div>
<div class="abs" style="left:520px;top:260px"><svg class="" width="29" height="29" viewBox="0 0 24 24" style="" fill="none"><path d="M3 12h17M13 5l7 7-7 7" stroke="#ded6fe" stroke-width="2.300" fill="none"/></svg></div>
<div class="card" style="left:35px"><div class="gr" style="background:linear-gradient(90deg,#5533ea,#4a4ae8 40%,#2c78e0)"></div><div class="circ" style="left:36px;top:58px"><svg width="174" height="174" viewBox="0 0 174 174"><defs><linearGradient id="ccbg" x1="0" y1="0" x2="0" y2="1"><stop offset="0" stop-color="#b7e1e9"/><stop offset=".75" stop-color="#d3ecf1"/><stop offset=".78" stop-color="#f4d6e2"/><stop offset="1" stop-color="#ecc9dc"/></linearGradient><linearGradient id="ccbase" x1="0" y1="0" x2="1" y2="0"><stop offset="0" stop-color="#b8742f"/><stop offset=".5" stop-color="#e0a055"/><stop offset="1" stop-color="#b06a2c"/></linearGradient></defs><rect width="174" height="174" fill="url(#ccbg)"/><ellipse cx="170" cy="141" rx="22.0" ry="4" fill="#d9a9b6" opacity=".55"/><path d="M148.0 119L192.0 119L187.0 140L153.0 140Z" fill="url(#ccbase)"/><path d="M153.5 121L156.2 140" stroke="#9a5a22" stroke-width=".8" opacity=".6"/><path d="M159.0 121L160.8 140" stroke="#9a5a22" stroke-width=".8" opacity=".6"/><path d="M164.5 121L165.4 140" stroke="#9a5a22" stroke-width=".8" opacity=".6"/><path d="M170.0 121L170.0 140" stroke="#9a5a22" stroke-width=".8" opacity=".6"/><path d="M175.5 121L174.6 140" stroke="#9a5a22" stroke-width=".8" opacity=".6"/><path d="M181.0 121L179.2 140" stroke="#9a5a22" stroke-width=".8" opacity=".6"/><path d="M186.5 121L183.8 140" stroke="#9a5a22" stroke-width=".8" opacity=".6"/><path d="M146.0 106C146.0 94 158.0 94 161.0 90C164.0 86 168.0 86 170 81C173.0 87 180.0 88 183.0 92C192.0 94 195.0 100 194.0 108Z" fill="#7fcdb9"/><path d="M160.0 92C168.0 96 178.0 94 184.0 94" stroke="#5fb5a0" stroke-width="1.2" fill="none"/><path d="M152.0 99C164.0 103 178.0 102 190.0 99" stroke="#a5e0d0" stroke-width="1.2" fill="none"/><path d="M143.0 105Q170 100 197.0 105L195.0 119Q170 125 145.0 119Z" fill="#d9dfd3"/><circle cx="161.2" cy="106.7" r="1.2" fill="#57b85a"/><circle cx="147.4" cy="118.8" r="1.2" fill="#e8453c"/><circle cx="163.3" cy="105.0" r="1.2" fill="#ffffff"/><circle cx="155.7" cy="105.5" r="1.2" fill="#f08ab0"/><circle cx="148.5" cy="105.6" r="1.2" fill="#f08ab0"/><circle cx="148.0" cy="114.2" r="1.2" fill="#f2c23e"/><circle cx="176.5" cy="114.5" r="1.2" fill="#e8453c"/><circle cx="173.9" cy="111.1" r="1.2" fill="#f2c23e"/><circle cx="147.3" cy="119.5" r="1.2" fill="#3c7fd9"/><circle cx="166.0" cy="113.7" r="1.2" fill="#ffffff"/><circle cx="160.4" cy="118.7" r="1.2" fill="#f2c23e"/><circle cx="150.2" cy="114.3" r="1.2" fill="#f2c23e"/><circle cx="163.6" cy="113.9" r="1.2" fill="#e8453c"/><circle cx="173.2" cy="115.1" r="1.2" fill="#f08ab0"/><circle cx="179.0" cy="111.7" r="1.2" fill="#3c7fd9"/><circle cx="168.3" cy="120.6" r="1.2" fill="#3c7fd9"/><circle cx="160.0" cy="118.3" r="1.2" fill="#57b85a"/><circle cx="184.0" cy="105.5" r="1.2" fill="#3c7fd9"/><circle cx="171.3" cy="119.8" r="1.2" fill="#57b85a"/><circle cx="167.4" cy="115.0" r="1.2" fill="#e8453c"/><circle cx="150.9" cy="111.5" r="1.2" fill="#f28a30"/><circle cx="162.1" cy="120.8" r="1.2" fill="#f08ab0"/><circle cx="147.0" cy="116.0" r="1.2" fill="#f28a30"/><circle cx="172.9" cy="118.2" r="1.2" fill="#f28a30"/><circle cx="160.7" cy="116.5" r="1.2" fill="#ffffff"/><circle cx="169.8" cy="118.3" r="1.2" fill="#e8453c"/><circle cx="187.0" cy="121.0" r="1.2" fill="#f08ab0"/><circle cx="179.9" cy="105.2" r="1.2" fill="#57b85a"/><circle cx="180.1" cy="115.6" r="1.2" fill="#57b85a"/><circle cx="186.1" cy="109.1" r="1.2" fill="#f08ab0"/><circle cx="189.4" cy="110.2" r="1.2" fill="#f08ab0"/><circle cx="162.8" cy="115.0" r="1.2" fill="#f08ab0"/><circle cx="147.9" cy="117.8" r="1.2" fill="#f2c23e"/><circle cx="181.9" cy="111.2" r="1.2" fill="#f28a30"/><circle cx="169.8" cy="107.0" r="1.2" fill="#f08ab0"/><circle cx="172.5" cy="119.9" r="1.2" fill="#f28a30"/><circle cx="166.5" cy="113.9" r="1.2" fill="#57b85a"/><circle cx="165.8" cy="110.5" r="1.2" fill="#f08ab0"/><circle cx="192.9" cy="106.7" r="1.2" fill="#f2c23e"/><circle cx="152.6" cy="115.9" r="1.2" fill="#e8453c"/><circle cx="169.2" cy="114.6" r="1.2" fill="#3c7fd9"/><circle cx="159.1" cy="106.6" r="1.2" fill="#ffffff"/><circle cx="163.5" cy="114.2" r="1.2" fill="#f2c23e"/><circle cx="179.5" cy="113.3" r="1.2" fill="#ffffff"/><circle cx="177.7" cy="117.3" r="1.2" fill="#f08ab0"/><circle cx="190.0" cy="118.0" r="1.2" fill="#f28a30"/><circle cx="179.0" cy="114.1" r="1.2" fill="#f08ab0"/><circle cx="164.9" cy="105.9" r="1.2" fill="#57b85a"/><circle cx="165.0" cy="107.4" r="1.2" fill="#f2c23e"/><circle cx="167.0" cy="106.0" r="1.2" fill="#ffffff"/><circle cx="147.6" cy="104.0" r="1.2" fill="#f2c23e"/><circle cx="171.8" cy="121.1" r="1.2" fill="#ffffff"/><circle cx="146.3" cy="119.7" r="1.2" fill="#ffffff"/><circle cx="163.8" cy="115.4" r="1.2" fill="#3c7fd9"/><circle cx="175.1" cy="112.5" r="1.2" fill="#e8453c"/><circle cx="187.4" cy="121.9" r="1.2" fill="#f08ab0"/><circle cx="169.0" cy="109.6" r="1.2" fill="#f2c23e"/><circle cx="150.1" cy="110.2" r="1.2" fill="#3c7fd9"/><circle cx="168.9" cy="116.5" r="1.2" fill="#ffffff"/><circle cx="146.2" cy="121.1" r="1.2" fill="#ffffff"/><circle cx="163.1" cy="116.4" r="1.2" fill="#e8453c"/><circle cx="182.9" cy="109.4" r="1.2" fill="#57b85a"/><circle cx="188.2" cy="116.5" r="1.2" fill="#3c7fd9"/><circle cx="170.9" cy="120.3" r="1.2" fill="#3c7fd9"/><circle cx="183.6" cy="113.6" r="1.2" fill="#f28a30"/><circle cx="170.1" cy="115.5" r="1.2" fill="#ffffff"/><circle cx="185.6" cy="121.7" r="1.2" fill="#f28a30"/><circle cx="154.8" cy="108.3" r="1.2" fill="#f08ab0"/><circle cx="182.0" cy="108.1" r="1.2" fill="#ffffff"/><circle cx="169.6" cy="117.2" r="1.2" fill="#e8453c"/><circle cx="184.5" cy="112.5" r="1.2" fill="#f2c23e"/><circle cx="179.6" cy="121.2" r="1.2" fill="#f08ab0"/><circle cx="185.4" cy="117.0" r="1.2" fill="#3c7fd9"/><circle cx="192.8" cy="110.6" r="1.2" fill="#f2c23e"/><circle cx="150.1" cy="112.5" r="1.2" fill="#3c7fd9"/><circle cx="155.2" cy="115.2" r="1.2" fill="#ffffff"/><circle cx="187.0" cy="112.6" r="1.2" fill="#57b85a"/><circle cx="162.2" cy="115.6" r="1.2" fill="#f28a30"/><circle cx="178.0" cy="120.4" r="1.2" fill="#f28a30"/><circle cx="180.6" cy="107.6" r="1.2" fill="#f2c23e"/><circle cx="166.7" cy="115.4" r="1.2" fill="#e8453c"/><circle cx="185.0" cy="121.5" r="1.2" fill="#f08ab0"/><circle cx="168.2" cy="117.4" r="1.2" fill="#e8453c"/><circle cx="181.2" cy="107.1" r="1.2" fill="#f2c23e"/><circle cx="146.4" cy="114.6" r="1.2" fill="#f08ab0"/><circle cx="185.3" cy="106.6" r="1.2" fill="#f28a30"/><circle cx="174.8" cy="112.5" r="1.2" fill="#3c7fd9"/><circle cx="152.8" cy="113.9" r="1.2" fill="#e8453c"/><circle cx="145.7" cy="121.5" r="1.2" fill="#57b85a"/><circle cx="150.1" cy="117.5" r="1.2" fill="#f2c23e"/><circle cx="166.7" cy="119.7" r="1.2" fill="#f28a30"/><circle cx="188.7" cy="104.5" r="1.2" fill="#f2c23e"/><circle cx="159.6" cy="108.3" r="1.2" fill="#ffffff"/><circle cx="161.3" cy="113.8" r="1.2" fill="#f28a30"/><circle cx="151.6" cy="120.4" r="1.2" fill="#3c7fd9"/><circle cx="189.9" cy="115.9" r="1.2" fill="#f28a30"/><circle cx="190.2" cy="111.6" r="1.2" fill="#ffffff"/><circle cx="151.5" cy="106.7" r="1.2" fill="#ffffff"/><circle cx="145.9" cy="111.9" r="1.2" fill="#f2c23e"/><circle cx="175.4" cy="118.0" r="1.2" fill="#f2c23e"/><circle cx="153.6" cy="112.5" r="1.2" fill="#57b85a"/><circle cx="151.0" cy="105.1" r="1.2" fill="#57b85a"/><circle cx="170.9" cy="114.0" r="1.2" fill="#f28a30"/><circle cx="183.8" cy="119.9" r="1.2" fill="#e8453c"/><circle cx="157.4" cy="109.0" r="1.2" fill="#f28a30"/><circle cx="149.9" cy="112.1" r="1.2" fill="#e8453c"/><circle cx="183.0" cy="120.4" r="1.2" fill="#f08ab0"/><circle cx="161.3" cy="121.5" r="1.2" fill="#ffffff"/><circle cx="170.6" cy="116.5" r="1.2" fill="#f08ab0"/><circle cx="170.4" cy="118.5" r="1.2" fill="#ffffff"/><ellipse cx="17" cy="139" rx="22.0" ry="4" fill="#d9a9b6" opacity=".55"/><path d="M-5.0 117L39.0 117L34.0 138L0.0 138Z" fill="url(#ccbase)"/><path d="M0.5 119L3.200000000000001 138" stroke="#9a5a22" stroke-width=".8" opacity=".6"/><path d="M6.0 119L7.800000000000001 138" stroke="#9a5a22" stroke-width=".8" opacity=".6"/><path d="M11.5 119L12.4 138" stroke="#9a5a22" stroke-width=".8" opacity=".6"/><path d="M17.0 119L17.0 138" stroke="#9a5a22" stroke-width=".8" opacity=".6"/><path d="M22.5 119L21.6 138" stroke="#9a5a22" stroke-width=".8" opacity=".6"/><path d="M28.0 119L26.2 138" stroke="#9a5a22" stroke-width=".8" opacity=".6"/><path d="M33.5 119L30.799999999999997 138" stroke="#9a5a22" stroke-width=".8" opacity=".6"/><path d="M-7.0 104C-7.0 92 5.0 92 8.0 88C11.0 84 15.0 84 17 79C20.0 85 27.0 86 30.0 90C39.0 92 42.0 98 41.0 106Z" fill="#7fcdb9"/><path d="M7.0 90C15.0 94 25.0 92 31.0 92" stroke="#5fb5a0" stroke-width="1.2" fill="none"/><path d="M-1.0 97C11.0 101 25.0 100 37.0 97" stroke="#a5e0d0" stroke-width="1.2" fill="none"/><path d="M-10.0 103Q17 98 44.0 103L42.0 117Q17 123 -8.0 117Z" fill="#d9dfd3"/><circle cx="39.1" cy="114.6" r="1.2" fill="#3c7fd9"/><circle cx="38.1" cy="118.1" r="1.2" fill="#f2c23e"/><circle cx="34.0" cy="104.5" r="1.2" fill="#e8453c"/><circle cx="11.6" cy="107.7" r="1.2" fill="#57b85a"/><circle cx="4.0" cy="103.3" r="1.2" fill="#57b85a"/><circle cx="7.1" cy="104.2" r="1.2" fill="#f28a30"/><circle cx="-0.3" cy="114.9" r="1.2" fill="#57b85a"/><circle cx="10.3" cy="106.6" r="1.2" fill="#f2c23e"/><circle cx="40.4" cy="106.0" r="1.2" fill="#e8453c"/><circle cx="11.9" cy="110.8" r="1.2" fill="#57b85a"/><circle cx="33.6" cy="104.9" r="1.2" fill="#f08ab0"/><circle cx="41.7" cy="109.3" r="1.2" fill="#f08ab0"/><circle cx="1.8" cy="107.7" r="1.2" fill="#57b85a"/><circle cx="10.3" cy="108.1" r="1.2" fill="#f08ab0"/><circle cx="14.0" cy="102.3" r="1.2" fill="#3c7fd9"/><circle cx="17.9" cy="107.3" r="1.2" fill="#e8453c"/><circle cx="-2.4" cy="118.5" r="1.2" fill="#f2c23e"/><circle cx="40.6" cy="103.9" r="1.2" fill="#3c7fd9"/><circle cx="5.6" cy="118.3" r="1.2" fill="#f2c23e"/><circle cx="5.5" cy="104.3" r="1.2" fill="#f08ab0"/><circle cx="34.5" cy="114.2" r="1.2" fill="#3c7fd9"/><circle cx="12.3" cy="111.7" r="1.2" fill="#ffffff"/><circle cx="20.5" cy="114.6" r="1.2" fill="#e8453c"/><circle cx="6.0" cy="116.4" r="1.2" fill="#f2c23e"/><circle cx="13.3" cy="103.3" r="1.2" fill="#e8453c"/><circle cx="23.7" cy="116.4" r="1.2" fill="#e8453c"/><circle cx="22.4" cy="106.0" r="1.2" fill="#3c7fd9"/><circle cx="35.1" cy="110.2" r="1.2" fill="#3c7fd9"/><circle cx="41.7" cy="109.5" r="1.2" fill="#3c7fd9"/><circle cx="23.1" cy="102.8" r="1.2" fill="#57b85a"/><circle cx="3.9" cy="104.0" r="1.2" fill="#f2c23e"/><circle cx="5.1" cy="105.3" r="1.2" fill="#3c7fd9"/><circle cx="23.4" cy="111.6" r="1.2" fill="#f2c23e"/><circle cx="6.5" cy="111.0" r="1.2" fill="#f2c23e"/><circle cx="5.5" cy="116.5" r="1.2" fill="#3c7fd9"/><circle cx="-6.2" cy="102.3" r="1.2" fill="#ffffff"/><circle cx="19.6" cy="105.4" r="1.2" fill="#f08ab0"/><circle cx="4.3" cy="110.0" r="1.2" fill="#57b85a"/><circle cx="32.9" cy="109.8" r="1.2" fill="#f08ab0"/><circle cx="19.3" cy="118.0" r="1.2" fill="#ffffff"/><circle cx="7.4" cy="105.9" r="1.2" fill="#f2c23e"/><circle cx="9.1" cy="117.0" r="1.2" fill="#57b85a"/><circle cx="28.4" cy="104.5" r="1.2" fill="#3c7fd9"/><circle cx="41.1" cy="117.1" r="1.2" fill="#e8453c"/><circle cx="-4.5" cy="115.3" r="1.2" fill="#3c7fd9"/><circle cx="13.5" cy="103.0" r="1.2" fill="#57b85a"/><circle cx="34.1" cy="117.7" r="1.2" fill="#57b85a"/><circle cx="40.5" cy="112.8" r="1.2" fill="#57b85a"/><circle cx="6.7" cy="110.3" r="1.2" fill="#f2c23e"/><circle cx="5.5" cy="102.1" r="1.2" fill="#3c7fd9"/><circle cx="40.1" cy="119.5" r="1.2" fill="#ffffff"/><circle cx="8.2" cy="102.6" r="1.2" fill="#3c7fd9"/><circle cx="2.9" cy="105.3" r="1.2" fill="#3c7fd9"/><circle cx="11.1" cy="110.5" r="1.2" fill="#ffffff"/><circle cx="24.8" cy="106.5" r="1.2" fill="#f28a30"/><circle cx="-7.8" cy="106.8" r="1.2" fill="#e8453c"/><circle cx="-0.8" cy="112.6" r="1.2" fill="#f08ab0"/><circle cx="-6.9" cy="107.5" r="1.2" fill="#f2c23e"/><circle cx="-3.8" cy="119.2" r="1.2" fill="#f28a30"/><circle cx="29.5" cy="113.8" r="1.2" fill="#57b85a"/><circle cx="31.2" cy="112.7" r="1.2" fill="#f28a30"/><circle cx="8.3" cy="119.7" r="1.2" fill="#f2c23e"/><circle cx="6.2" cy="113.1" r="1.2" fill="#f2c23e"/><circle cx="-5.8" cy="117.0" r="1.2" fill="#ffffff"/><circle cx="23.4" cy="115.2" r="1.2" fill="#f28a30"/><circle cx="17.3" cy="118.4" r="1.2" fill="#f28a30"/><circle cx="17.2" cy="117.0" r="1.2" fill="#f28a30"/><circle cx="-7.2" cy="114.4" r="1.2" fill="#f28a30"/><circle cx="36.6" cy="114.3" r="1.2" fill="#57b85a"/><circle cx="24.1" cy="103.5" r="1.2" fill="#e8453c"/><circle cx="-1.3" cy="108.5" r="1.2" fill="#e8453c"/><circle cx="10.8" cy="110.1" r="1.2" fill="#e8453c"/><circle cx="23.4" cy="113.3" r="1.2" fill="#57b85a"/><circle cx="4.2" cy="106.7" r="1.2" fill="#f08ab0"/><circle cx="31.9" cy="115.5" r="1.2" fill="#ffffff"/><circle cx="36.9" cy="103.7" r="1.2" fill="#ffffff"/><circle cx="-4.7" cy="115.3" r="1.2" fill="#3c7fd9"/><circle cx="32.5" cy="117.2" r="1.2" fill="#f2c23e"/><circle cx="28.5" cy="105.7" r="1.2" fill="#57b85a"/><circle cx="24.5" cy="110.3" r="1.2" fill="#f28a30"/><circle cx="11.1" cy="110.6" r="1.2" fill="#57b85a"/><circle cx="6.4" cy="102.8" r="1.2" fill="#57b85a"/><circle cx="24.1" cy="103.4" r="1.2" fill="#f2c23e"/><circle cx="8.6" cy="113.7" r="1.2" fill="#57b85a"/><circle cx="7.2" cy="112.2" r="1.2" fill="#e8453c"/><circle cx="16.1" cy="110.7" r="1.2" fill="#57b85a"/><circle cx="-3.0" cy="105.9" r="1.2" fill="#f08ab0"/><circle cx="6.5" cy="111.3" r="1.2" fill="#f08ab0"/><circle cx="15.3" cy="115.8" r="1.2" fill="#ffffff"/><circle cx="2.0" cy="119.6" r="1.2" fill="#f08ab0"/><circle cx="-7.1" cy="110.3" r="1.2" fill="#f28a30"/><circle cx="17.3" cy="119.9" r="1.2" fill="#3c7fd9"/><circle cx="11.3" cy="118.5" r="1.2" fill="#f2c23e"/><circle cx="-4.3" cy="103.6" r="1.2" fill="#57b85a"/><circle cx="18.2" cy="119.1" r="1.2" fill="#f2c23e"/><circle cx="22.2" cy="113.4" r="1.2" fill="#3c7fd9"/><circle cx="36.3" cy="114.7" r="1.2" fill="#f2c23e"/><circle cx="16.9" cy="117.8" r="1.2" fill="#f08ab0"/><circle cx="-6.8" cy="102.1" r="1.2" fill="#f08ab0"/><circle cx="26.1" cy="109.3" r="1.2" fill="#57b85a"/><circle cx="-1.0" cy="108.2" r="1.2" fill="#3c7fd9"/><circle cx="-2.0" cy="108.0" r="1.2" fill="#3c7fd9"/><circle cx="29.5" cy="117.1" r="1.2" fill="#e8453c"/><circle cx="39.0" cy="105.5" r="1.2" fill="#e8453c"/><circle cx="37.1" cy="107.2" r="1.2" fill="#3c7fd9"/><circle cx="-4.8" cy="109.0" r="1.2" fill="#f28a30"/><circle cx="21.5" cy="108.5" r="1.2" fill="#f08ab0"/><circle cx="29.8" cy="117.4" r="1.2" fill="#3c7fd9"/><circle cx="-2.9" cy="117.0" r="1.2" fill="#3c7fd9"/><circle cx="23.7" cy="104.7" r="1.2" fill="#3c7fd9"/><ellipse cx="70" cy="139" rx="23.1" ry="4" fill="#d9a9b6" opacity=".55"/><path d="M46.9 117L93.1 117L87.85 138L52.15 138Z" fill="url(#ccbase)"/><path d="M52.675 119L55.51 138" stroke="#9a5a22" stroke-width=".8" opacity=".6"/><path d="M58.45 119L60.34 138" stroke="#9a5a22" stroke-width=".8" opacity=".6"/><path d="M64.225 119L65.17 138" stroke="#9a5a22" stroke-width=".8" opacity=".6"/><path d="M70.0 119L70.0 138" stroke="#9a5a22" stroke-width=".8" opacity=".6"/><path d="M75.775 119L74.83 138" stroke="#9a5a22" stroke-width=".8" opacity=".6"/><path d="M81.55 119L79.66 138" stroke="#9a5a22" stroke-width=".8" opacity=".6"/><path d="M87.325 119L84.49 138" stroke="#9a5a22" stroke-width=".8" opacity=".6"/><path d="M44.8 104C44.8 92 57.4 92 60.55 88C63.7 84 67.9 84 70 79C73.15 85 80.5 86 83.65 90C93.1 92 96.25 98 95.2 106Z" fill="#7fcdb9"/><path d="M59.5 90C67.9 94 78.4 92 84.7 92" stroke="#5fb5a0" stroke-width="1.2" fill="none"/><path d="M51.099999999999994 97C63.7 101 78.4 100 91.0 97" stroke="#a5e0d0" stroke-width="1.2" fill="none"/><path d="M41.65 103Q70 98 98.35 103L96.25 117Q70 123 43.75 117Z" fill="#d9dfd3"/><circle cx="66.7" cy="107.7" r="1.2" fill="#f28a30"/><circle cx="63.4" cy="119.2" r="1.2" fill="#e8453c"/><circle cx="86.4" cy="113.4" r="1.2" fill="#ffffff"/><circle cx="72.6" cy="115.0" r="1.2" fill="#e8453c"/><circle cx="92.8" cy="109.4" r="1.2" fill="#ffffff"/><circle cx="83.3" cy="113.6" r="1.2" fill="#3c7fd9"/><circle cx="69.2" cy="118.4" r="1.2" fill="#ffffff"/><circle cx="50.4" cy="110.5" r="1.2" fill="#3c7fd9"/><circle cx="58.5" cy="106.6" r="1.2" fill="#57b85a"/><circle cx="95.0" cy="106.7" r="1.2" fill="#57b85a"/><circle cx="56.3" cy="110.7" r="1.2" fill="#57b85a"/><circle cx="64.5" cy="105.0" r="1.2" fill="#f2c23e"/><circle cx="47.7" cy="111.0" r="1.2" fill="#f28a30"/><circle cx="69.8" cy="106.0" r="1.2" fill="#3c7fd9"/><circle cx="96.1" cy="110.1" r="1.2" fill="#f2c23e"/><circle cx="72.5" cy="106.4" r="1.2" fill="#f2c23e"/><circle cx="61.7" cy="103.6" r="1.2" fill="#f2c23e"/><circle cx="63.1" cy="116.6" r="1.2" fill="#f2c23e"/><circle cx="90.3" cy="115.5" r="1.2" fill="#f08ab0"/><circle cx="63.8" cy="115.4" r="1.2" fill="#f2c23e"/><circle cx="63.5" cy="108.1" r="1.2" fill="#e8453c"/><circle cx="69.9" cy="112.3" r="1.2" fill="#3c7fd9"/><circle cx="50.4" cy="111.1" r="1.2" fill="#57b85a"/><circle cx="85.2" cy="117.3" r="1.2" fill="#e8453c"/><circle cx="58.0" cy="106.5" r="1.2" fill="#f08ab0"/><circle cx="77.7" cy="109.8" r="1.2" fill="#3c7fd9"/><circle cx="88.3" cy="117.7" r="1.2" fill="#e8453c"/><circle cx="50.4" cy="109.7" r="1.2" fill="#f28a30"/><circle cx="90.8" cy="110.5" r="1.2" fill="#ffffff"/><circle cx="69.5" cy="103.3" r="1.2" fill="#f28a30"/><circle cx="71.5" cy="110.4" r="1.2" fill="#f08ab0"/><circle cx="56.8" cy="104.0" r="1.2" fill="#f2c23e"/><circle cx="51.7" cy="119.5" r="1.2" fill="#e8453c"/><circle cx="93.2" cy="115.0" r="1.2" fill="#57b85a"/><circle cx="88.2" cy="118.1" r="1.2" fill="#e8453c"/><circle cx="72.7" cy="102.7" r="1.2" fill="#f28a30"/><circle cx="50.3" cy="112.2" r="1.2" fill="#e8453c"/><circle cx="77.6" cy="107.5" r="1.2" fill="#f2c23e"/><circle cx="76.6" cy="111.5" r="1.2" fill="#f08ab0"/><circle cx="80.4" cy="104.0" r="1.2" fill="#e8453c"/><circle cx="59.5" cy="119.0" r="1.2" fill="#f2c23e"/><circle cx="64.1" cy="106.0" r="1.2" fill="#ffffff"/><circle cx="43.8" cy="111.7" r="1.2" fill="#f08ab0"/><circle cx="58.4" cy="107.7" r="1.2" fill="#f28a30"/><circle cx="90.1" cy="110.6" r="1.2" fill="#f2c23e"/><circle cx="72.5" cy="102.5" r="1.2" fill="#f08ab0"/><circle cx="80.7" cy="107.5" r="1.2" fill="#e8453c"/><circle cx="53.9" cy="117.9" r="1.2" fill="#57b85a"/><circle cx="65.8" cy="106.6" r="1.2" fill="#57b85a"/><circle cx="66.0" cy="108.7" r="1.2" fill="#f08ab0"/><circle cx="45.5" cy="108.1" r="1.2" fill="#f08ab0"/><circle cx="62.8" cy="109.1" r="1.2" fill="#e8453c"/><circle cx="85.6" cy="115.3" r="1.2" fill="#ffffff"/><circle cx="47.3" cy="110.9" r="1.2" fill="#f2c23e"/><circle cx="60.1" cy="116.8" r="1.2" fill="#f2c23e"/><circle cx="68.2" cy="106.8" r="1.2" fill="#3c7fd9"/><circle cx="49.5" cy="113.2" r="1.2" fill="#ffffff"/><circle cx="53.6" cy="106.0" r="1.2" fill="#f08ab0"/><circle cx="91.5" cy="103.0" r="1.2" fill="#ffffff"/><circle cx="51.4" cy="109.1" r="1.2" fill="#f2c23e"/><circle cx="45.0" cy="112.7" r="1.2" fill="#f08ab0"/><circle cx="46.5" cy="103.1" r="1.2" fill="#f08ab0"/><circle cx="67.4" cy="114.8" r="1.2" fill="#3c7fd9"/><circle cx="82.2" cy="120.0" r="1.2" fill="#f2c23e"/><circle cx="61.0" cy="105.3" r="1.2" fill="#ffffff"/><circle cx="82.9" cy="102.6" r="1.2" fill="#57b85a"/><circle cx="81.8" cy="117.1" r="1.2" fill="#3c7fd9"/><circle cx="67.0" cy="104.0" r="1.2" fill="#e8453c"/><circle cx="58.4" cy="108.3" r="1.2" fill="#e8453c"/><circle cx="73.2" cy="115.7" r="1.2" fill="#f08ab0"/><circle cx="62.5" cy="116.8" r="1.2" fill="#f28a30"/><circle cx="86.0" cy="103.6" r="1.2" fill="#57b85a"/><circle cx="68.6" cy="108.7" r="1.2" fill="#f08ab0"/><circle cx="53.9" cy="108.6" r="1.2" fill="#f08ab0"/><circle cx="45.3" cy="109.4" r="1.2" fill="#f28a30"/><circle cx="76.6" cy="109.3" r="1.2" fill="#f08ab0"/><circle cx="45.6" cy="103.1" r="1.2" fill="#e8453c"/><circle cx="57.2" cy="115.5" r="1.2" fill="#ffffff"/><circle cx="61.6" cy="106.9" r="1.2" fill="#ffffff"/><circle cx="46.0" cy="115.4" r="1.2" fill="#57b85a"/><circle cx="60.4" cy="107.0" r="1.2" fill="#e8453c"/><circle cx="81.6" cy="112.7" r="1.2" fill="#f28a30"/><circle cx="77.0" cy="119.0" r="1.2" fill="#e8453c"/><circle cx="87.1" cy="103.9" r="1.2" fill="#57b85a"/><circle cx="94.0" cy="119.2" r="1.2" fill="#f08ab0"/><circle cx="85.2" cy="118.4" r="1.2" fill="#f28a30"/><circle cx="69.7" cy="118.7" r="1.2" fill="#f2c23e"/><circle cx="44.2" cy="118.8" r="1.2" fill="#3c7fd9"/><circle cx="86.9" cy="115.9" r="1.2" fill="#ffffff"/><circle cx="56.1" cy="117.5" r="1.2" fill="#f08ab0"/><circle cx="62.7" cy="116.1" r="1.2" fill="#e8453c"/><circle cx="70.6" cy="109.1" r="1.2" fill="#f2c23e"/><circle cx="56.7" cy="103.2" r="1.2" fill="#e8453c"/><circle cx="69.0" cy="111.8" r="1.2" fill="#f2c23e"/><circle cx="95.2" cy="117.9" r="1.2" fill="#e8453c"/><circle cx="57.7" cy="103.5" r="1.2" fill="#e8453c"/><circle cx="65.9" cy="119.8" r="1.2" fill="#f08ab0"/><circle cx="52.8" cy="104.4" r="1.2" fill="#f08ab0"/><circle cx="76.3" cy="114.1" r="1.2" fill="#57b85a"/><circle cx="72.0" cy="115.9" r="1.2" fill="#f28a30"/><circle cx="50.1" cy="117.1" r="1.2" fill="#3c7fd9"/><circle cx="58.4" cy="106.8" r="1.2" fill="#3c7fd9"/><circle cx="82.5" cy="105.6" r="1.2" fill="#f2c23e"/><circle cx="53.5" cy="106.2" r="1.2" fill="#3c7fd9"/><circle cx="90.2" cy="112.4" r="1.2" fill="#3c7fd9"/><circle cx="47.2" cy="106.5" r="1.2" fill="#f2c23e"/><circle cx="70.4" cy="106.2" r="1.2" fill="#f28a30"/><circle cx="49.0" cy="110.4" r="1.2" fill="#e8453c"/><circle cx="49.1" cy="110.5" r="1.2" fill="#f28a30"/><circle cx="55.9" cy="110.1" r="1.2" fill="#3c7fd9"/><ellipse cx="124" cy="140" rx="22.0" ry="4" fill="#d9a9b6" opacity=".55"/><path d="M102.0 118L146.0 118L141.0 139L107.0 139Z" fill="url(#ccbase)"/><path d="M107.5 120L110.2 139" stroke="#9a5a22" stroke-width=".8" opacity=".6"/><path d="M113.0 120L114.8 139" stroke="#9a5a22" stroke-width=".8" opacity=".6"/><path d="M118.5 120L119.4 139" stroke="#9a5a22" stroke-width=".8" opacity=".6"/><path d="M124.0 120L124.0 139" stroke="#9a5a22" stroke-width=".8" opacity=".6"/><path d="M129.5 120L128.6 139" stroke="#9a5a22" stroke-width=".8" opacity=".6"/><path d="M135.0 120L133.2 139" stroke="#9a5a22" stroke-width=".8" opacity=".6"/><path d="M140.5 120L137.8 139" stroke="#9a5a22" stroke-width=".8" opacity=".6"/><path d="M100.0 105C100.0 93 112.0 93 115.0 89C118.0 85 122.0 85 124 80C127.0 86 134.0 87 137.0 91C146.0 93 149.0 99 148.0 107Z" fill="#7fcdb9"/><path d="M114.0 91C122.0 95 132.0 93 138.0 93" stroke="#5fb5a0" stroke-width="1.2" fill="none"/><path d="M106.0 98C118.0 102 132.0 101 144.0 98" stroke="#a5e0d0" stroke-width="1.2" fill="none"/><path d="M97.0 104Q124 99 151.0 104L149.0 118Q124 124 99.0 118Z" fill="#d9dfd3"/><circle cx="101.0" cy="108.3" r="1.2" fill="#e8453c"/><circle cx="101.5" cy="113.8" r="1.2" fill="#f28a30"/><circle cx="128.2" cy="119.7" r="1.2" fill="#3c7fd9"/><circle cx="124.6" cy="106.2" r="1.2" fill="#ffffff"/><circle cx="112.0" cy="117.0" r="1.2" fill="#e8453c"/><circle cx="104.3" cy="113.7" r="1.2" fill="#ffffff"/><circle cx="116.5" cy="103.7" r="1.2" fill="#3c7fd9"/><circle cx="106.1" cy="106.7" r="1.2" fill="#3c7fd9"/><circle cx="100.9" cy="116.2" r="1.2" fill="#f2c23e"/><circle cx="139.7" cy="117.7" r="1.2" fill="#f08ab0"/><circle cx="132.9" cy="106.3" r="1.2" fill="#3c7fd9"/><circle cx="102.9" cy="103.6" r="1.2" fill="#f08ab0"/><circle cx="126.4" cy="104.1" r="1.2" fill="#e8453c"/><circle cx="138.8" cy="115.0" r="1.2" fill="#f2c23e"/><circle cx="131.0" cy="104.6" r="1.2" fill="#f2c23e"/><circle cx="118.9" cy="107.9" r="1.2" fill="#3c7fd9"/><circle cx="132.4" cy="110.5" r="1.2" fill="#e8453c"/><circle cx="114.6" cy="113.2" r="1.2" fill="#3c7fd9"/><circle cx="119.7" cy="103.3" r="1.2" fill="#f28a30"/><circle cx="148.8" cy="109.5" r="1.2" fill="#f2c23e"/><circle cx="118.5" cy="110.3" r="1.2" fill="#e8453c"/><circle cx="120.7" cy="105.8" r="1.2" fill="#e8453c"/><circle cx="140.0" cy="110.3" r="1.2" fill="#3c7fd9"/><circle cx="122.0" cy="105.9" r="1.2" fill="#e8453c"/><circle cx="101.6" cy="105.6" r="1.2" fill="#f28a30"/><circle cx="144.5" cy="104.6" r="1.2" fill="#ffffff"/><circle cx="145.4" cy="116.3" r="1.2" fill="#f2c23e"/><circle cx="106.3" cy="108.1" r="1.2" fill="#ffffff"/><circle cx="107.6" cy="104.2" r="1.2" fill="#f08ab0"/><circle cx="123.5" cy="117.5" r="1.2" fill="#f28a30"/><circle cx="108.9" cy="105.3" r="1.2" fill="#e8453c"/><circle cx="147.8" cy="111.7" r="1.2" fill="#e8453c"/><circle cx="129.4" cy="114.5" r="1.2" fill="#e8453c"/><circle cx="144.2" cy="114.2" r="1.2" fill="#f28a30"/><circle cx="143.6" cy="114.5" r="1.2" fill="#f28a30"/><circle cx="110.1" cy="110.3" r="1.2" fill="#f28a30"/><circle cx="108.8" cy="111.5" r="1.2" fill="#ffffff"/><circle cx="109.9" cy="110.2" r="1.2" fill="#ffffff"/><circle cx="106.8" cy="109.5" r="1.2" fill="#f2c23e"/><circle cx="111.4" cy="116.0" r="1.2" fill="#f2c23e"/><circle cx="101.1" cy="113.1" r="1.2" fill="#f28a30"/><circle cx="132.6" cy="115.0" r="1.2" fill="#3c7fd9"/><circle cx="104.9" cy="113.8" r="1.2" fill="#ffffff"/><circle cx="141.5" cy="117.0" r="1.2" fill="#57b85a"/><circle cx="120.0" cy="113.5" r="1.2" fill="#f08ab0"/><circle cx="118.5" cy="109.6" r="1.2" fill="#ffffff"/><circle cx="120.9" cy="103.4" r="1.2" fill="#ffffff"/><circle cx="148.3" cy="111.4" r="1.2" fill="#f08ab0"/><circle cx="137.2" cy="117.0" r="1.2" fill="#f08ab0"/><circle cx="140.8" cy="117.6" r="1.2" fill="#f08ab0"/><circle cx="104.4" cy="105.3" r="1.2" fill="#f08ab0"/><circle cx="117.3" cy="117.4" r="1.2" fill="#ffffff"/><circle cx="124.5" cy="103.7" r="1.2" fill="#57b85a"/><circle cx="105.5" cy="119.6" r="1.2" fill="#3c7fd9"/><circle cx="137.9" cy="112.2" r="1.2" fill="#e8453c"/><circle cx="136.6" cy="119.1" r="1.2" fill="#57b85a"/><circle cx="146.5" cy="105.5" r="1.2" fill="#f28a30"/><circle cx="102.3" cy="114.1" r="1.2" fill="#57b85a"/><circle cx="139.7" cy="106.5" r="1.2" fill="#f08ab0"/><circle cx="113.4" cy="117.6" r="1.2" fill="#f28a30"/><circle cx="107.3" cy="117.2" r="1.2" fill="#f2c23e"/><circle cx="102.3" cy="109.3" r="1.2" fill="#f28a30"/><circle cx="111.6" cy="108.8" r="1.2" fill="#ffffff"/><circle cx="112.7" cy="117.7" r="1.2" fill="#f2c23e"/><circle cx="111.7" cy="120.4" r="1.2" fill="#f08ab0"/><circle cx="109.4" cy="107.7" r="1.2" fill="#ffffff"/><circle cx="110.9" cy="109.7" r="1.2" fill="#f2c23e"/><circle cx="108.1" cy="105.9" r="1.2" fill="#3c7fd9"/><circle cx="133.0" cy="119.1" r="1.2" fill="#f2c23e"/><circle cx="138.6" cy="107.8" r="1.2" fill="#f28a30"/><circle cx="125.5" cy="114.5" r="1.2" fill="#3c7fd9"/><circle cx="147.3" cy="111.2" r="1.2" fill="#ffffff"/><circle cx="128.0" cy="118.9" r="1.2" fill="#e8453c"/><circle cx="111.6" cy="112.6" r="1.2" fill="#f28a30"/><circle cx="118.7" cy="117.4" r="1.2" fill="#3c7fd9"/><circle cx="117.8" cy="109.6" r="1.2" fill="#f2c23e"/><circle cx="117.0" cy="116.8" r="1.2" fill="#f08ab0"/><circle cx="110.5" cy="114.1" r="1.2" fill="#e8453c"/><circle cx="113.8" cy="112.3" r="1.2" fill="#3c7fd9"/><circle cx="131.0" cy="120.7" r="1.2" fill="#ffffff"/><circle cx="145.4" cy="119.1" r="1.2" fill="#57b85a"/><circle cx="99.1" cy="103.6" r="1.2" fill="#f2c23e"/><circle cx="113.5" cy="114.3" r="1.2" fill="#f08ab0"/><circle cx="124.6" cy="119.1" r="1.2" fill="#f2c23e"/><circle cx="123.4" cy="114.0" r="1.2" fill="#e8453c"/><circle cx="100.1" cy="103.0" r="1.2" fill="#3c7fd9"/><circle cx="114.2" cy="112.4" r="1.2" fill="#ffffff"/><circle cx="110.2" cy="113.5" r="1.2" fill="#ffffff"/><circle cx="105.7" cy="109.6" r="1.2" fill="#f28a30"/><circle cx="122.7" cy="105.4" r="1.2" fill="#f28a30"/><circle cx="111.2" cy="105.7" r="1.2" fill="#e8453c"/><circle cx="102.2" cy="105.6" r="1.2" fill="#57b85a"/><circle cx="138.1" cy="110.2" r="1.2" fill="#3c7fd9"/><circle cx="147.4" cy="104.0" r="1.2" fill="#f28a30"/><circle cx="127.1" cy="109.3" r="1.2" fill="#57b85a"/><circle cx="127.9" cy="113.8" r="1.2" fill="#ffffff"/><circle cx="135.7" cy="107.5" r="1.2" fill="#e8453c"/><circle cx="101.2" cy="112.6" r="1.2" fill="#f08ab0"/><circle cx="108.3" cy="105.9" r="1.2" fill="#f28a30"/><circle cx="104.2" cy="114.0" r="1.2" fill="#57b85a"/><circle cx="146.0" cy="105.6" r="1.2" fill="#f2c23e"/><circle cx="124.9" cy="114.6" r="1.2" fill="#57b85a"/><circle cx="131.1" cy="117.6" r="1.2" fill="#f2c23e"/><circle cx="124.4" cy="104.1" r="1.2" fill="#57b85a"/><circle cx="101.4" cy="119.0" r="1.2" fill="#f28a30"/><circle cx="122.9" cy="112.7" r="1.2" fill="#f08ab0"/><circle cx="141.2" cy="116.4" r="1.2" fill="#f08ab0"/><circle cx="103.0" cy="114.8" r="1.2" fill="#f2c23e"/><circle cx="110.3" cy="104.9" r="1.2" fill="#f2c23e"/><circle cx="131.2" cy="105.2" r="1.2" fill="#57b85a"/></svg></div><div class="nm">Cupcake</div><div class="tg">A tag line</div></div>
<div class="card" style="left:304px"><div class="gr" style="background:linear-gradient(90deg,#0c8fd9,#00b4d8 55%,#0592d0)"></div><div class="circ" style="left:36px;top:58px"><svg width="174" height="174" viewBox="0 0 174 174"><defs><radialGradient id="dnbg" cx=".5" cy=".5" r=".6"><stop offset="0" stop-color="#f6efe3"/><stop offset="1" stop-color="#efe5d6"/></radialGradient><filter id="dnbl" x="-30%" y="-30%" width="160%" height="160%"><feGaussianBlur stdDeviation="3"/></filter></defs><rect width="174" height="174" fill="url(#dnbg)"/><ellipse cx="92" cy="93" rx="35" ry="34" fill="#b9a48e" opacity=".55" filter="url(#dnbl)"/><circle cx="88" cy="88" r="35" fill="#c79a62"/><circle cx="88" cy="87" r="33.5" fill="#4b2a22"/><circle cx="88" cy="87" r="26" fill="none" stroke="#5e382c" stroke-width="9" opacity=".8"/><circle cx="88" cy="88" r="8.500" fill="#2a1712"/><circle cx="89" cy="89" r="5.500" fill="#e9dfcf"/><rect x="89.7" y="109.4" width="2.600" height=".9" fill="#d9b58a" transform="rotate(67 89.7 109.4)"/><rect x="65.1" y="90.8" width="2.600" height=".9" fill="#ffffff" transform="rotate(109 65.1 90.8)"/><rect x="87.1" y="102.9" width="2.600" height=".9" fill="#ffffff" transform="rotate(179 87.1 102.9)"/><rect x="66.2" y="81.3" width="2.600" height=".9" fill="#e59aa8" transform="rotate(71 66.2 81.3)"/><rect x="89.6" y="101.1" width="2.600" height=".9" fill="#ffffff" transform="rotate(167 89.6 101.1)"/><rect x="86.6" y="61.9" width="2.600" height=".9" fill="#d9b58a" transform="rotate(12 86.6 61.9)"/><rect x="114.4" y="94.3" width="2.600" height=".9" fill="#f2c96a" transform="rotate(148 114.4 94.3)"/><rect x="62.3" y="91.4" width="2.600" height=".9" fill="#ffffff" transform="rotate(158 62.3 91.4)"/><rect x="66.0" y="104.1" width="2.600" height=".9" fill="#e59aa8" transform="rotate(80 66.0 104.1)"/><rect x="97.4" y="78.0" width="2.600" height=".9" fill="#e59aa8" transform="rotate(24 97.4 78.0)"/><rect x="86.7" y="112.1" width="2.600" height=".9" fill="#f2c96a" transform="rotate(140 86.7 112.1)"/><rect x="62.9" y="100.6" width="2.600" height=".9" fill="#d9b58a" transform="rotate(103 62.9 100.6)"/><rect x="68.0" y="75.1" width="2.600" height=".9" fill="#f3e7c8" transform="rotate(163 68.0 75.1)"/><rect x="107.7" y="62.0" width="2.600" height=".9" fill="#e59aa8" transform="rotate(121 107.7 62.0)"/><rect x="82.3" y="70.1" width="2.600" height=".9" fill="#d9b58a" transform="rotate(98 82.3 70.1)"/><rect x="64.4" y="76.1" width="2.600" height=".9" fill="#d9b58a" transform="rotate(38 64.4 76.1)"/><rect x="86.5" y="100.5" width="2.600" height=".9" fill="#ffffff" transform="rotate(87 86.5 100.5)"/><rect x="111.6" y="101.7" width="2.600" height=".9" fill="#e59aa8" transform="rotate(74 111.6 101.7)"/><rect x="107.8" y="89.5" width="2.600" height=".9" fill="#f3e7c8" transform="rotate(75 107.8 89.5)"/><rect x="111.0" y="93.6" width="2.600" height=".9" fill="#d9b58a" transform="rotate(8 111.0 93.6)"/><rect x="73.6" y="112.8" width="2.600" height=".9" fill="#d9b58a" transform="rotate(177 73.6 112.8)"/><rect x="89.0" y="98.7" width="2.600" height=".9" fill="#f3e7c8" transform="rotate(1 89.0 98.7)"/><rect x="78.6" y="80.2" width="2.600" height=".9" fill="#ffffff" transform="rotate(36 78.6 80.2)"/><rect x="83.7" y="103.0" width="2.600" height=".9" fill="#f2c96a" transform="rotate(124 83.7 103.0)"/><rect x="75.8" y="115.7" width="2.600" height=".9" fill="#ffffff" transform="rotate(161 75.8 115.7)"/><rect x="67.1" y="107.5" width="2.600" height=".9" fill="#d9b58a" transform="rotate(70 67.1 107.5)"/><rect x="82.5" y="75.1" width="2.600" height=".9" fill="#d9b58a" transform="rotate(175 82.5 75.1)"/><rect x="84.8" y="111.1" width="2.600" height=".9" fill="#f2c96a" transform="rotate(129 84.8 111.1)"/><rect x="72.8" y="93.3" width="2.600" height=".9" fill="#f2c96a" transform="rotate(55 72.8 93.3)"/><rect x="107.7" y="88.4" width="2.600" height=".9" fill="#f3e7c8" transform="rotate(104 107.7 88.4)"/><rect x="71.3" y="103.4" width="2.600" height=".9" fill="#f2c96a" transform="rotate(24 71.3 103.4)"/><rect x="63.3" y="92.3" width="2.600" height=".9" fill="#f2c96a" transform="rotate(63 63.3 92.3)"/><rect x="87.1" y="75.6" width="2.600" height=".9" fill="#f3e7c8" transform="rotate(11 87.1 75.6)"/><rect x="103.8" y="83.3" width="2.600" height=".9" fill="#d9b58a" transform="rotate(82 103.8 83.3)"/><rect x="76.2" y="78.2" width="2.600" height=".9" fill="#f2c96a" transform="rotate(33 76.2 78.2)"/><rect x="97.2" y="73.2" width="2.600" height=".9" fill="#f3e7c8" transform="rotate(142 97.2 73.2)"/><rect x="89.6" y="75.5" width="2.600" height=".9" fill="#e59aa8" transform="rotate(102 89.6 75.5)"/><rect x="82.2" y="101.6" width="2.600" height=".9" fill="#e59aa8" transform="rotate(145 82.2 101.6)"/><rect x="76.1" y="109.3" width="2.600" height=".9" fill="#f3e7c8" transform="rotate(117 76.1 109.3)"/><rect x="102.2" y="97.6" width="2.600" height=".9" fill="#e59aa8" transform="rotate(60 102.2 97.6)"/><rect x="61.2" y="97.9" width="2.600" height=".9" fill="#f2c96a" transform="rotate(30 61.2 97.9)"/><rect x="87.2" y="71.4" width="2.600" height=".9" fill="#f2c96a" transform="rotate(102 87.2 71.4)"/><rect x="90.1" y="100.4" width="2.600" height=".9" fill="#e59aa8" transform="rotate(95 90.1 100.4)"/><rect x="76.6" y="113.2" width="2.600" height=".9" fill="#f2c96a" transform="rotate(103 76.6 113.2)"/><rect x="72.8" y="111.0" width="2.600" height=".9" fill="#d9b58a" transform="rotate(15 72.8 111.0)"/><rect x="80.3" y="98.3" width="2.600" height=".9" fill="#f2c96a" transform="rotate(53 80.3 98.3)"/><rect x="64.3" y="92.3" width="2.600" height=".9" fill="#d9b58a" transform="rotate(52 64.3 92.3)"/><rect x="62.4" y="103.3" width="2.600" height=".9" fill="#f3e7c8" transform="rotate(28 62.4 103.3)"/><rect x="59.8" y="91.0" width="2.600" height=".9" fill="#d9b58a" transform="rotate(112 59.8 91.0)"/><rect x="59.6" y="99.4" width="2.600" height=".9" fill="#e59aa8" transform="rotate(167 59.6 99.4)"/><rect x="108.2" y="91.2" width="2.600" height=".9" fill="#d9b58a" transform="rotate(136 108.2 91.2)"/><rect x="109.8" y="81.9" width="2.600" height=".9" fill="#f3e7c8" transform="rotate(160 109.8 81.9)"/><rect x="107.7" y="62.6" width="2.600" height=".9" fill="#e59aa8" transform="rotate(22 107.7 62.6)"/><rect x="116.8" y="95.4" width="2.600" height=".9" fill="#e59aa8" transform="rotate(125 116.8 95.4)"/><rect x="111.8" y="68.9" width="2.600" height=".9" fill="#f3e7c8" transform="rotate(104 111.8 68.9)"/><rect x="74.6" y="88.6" width="2.600" height=".9" fill="#e59aa8" transform="rotate(91 74.6 88.6)"/><rect x="76.5" y="68.2" width="2.600" height=".9" fill="#d9b58a" transform="rotate(74 76.5 68.2)"/><rect x="98.3" y="95.9" width="2.600" height=".9" fill="#d9b58a" transform="rotate(175 98.3 95.9)"/><rect x="60.9" y="90.9" width="2.600" height=".9" fill="#e59aa8" transform="rotate(63 60.9 90.9)"/><rect x="109.3" y="107.6" width="2.600" height=".9" fill="#e59aa8" transform="rotate(21 109.3 107.6)"/><rect x="95.9" y="57.7" width="2.600" height=".9" fill="#f3e7c8" transform="rotate(145 95.9 57.7)"/><rect x="65.1" y="88.8" width="2.600" height=".9" fill="#f2c96a" transform="rotate(72 65.1 88.8)"/><rect x="88.3" y="111.0" width="2.600" height=".9" fill="#f3e7c8" transform="rotate(94 88.3 111.0)"/><rect x="61.1" y="91.6" width="2.600" height=".9" fill="#f3e7c8" transform="rotate(0 61.1 91.6)"/><rect x="89.9" y="75.2" width="2.600" height=".9" fill="#ffffff" transform="rotate(9 89.9 75.2)"/><rect x="116.6" y="82.4" width="2.600" height=".9" fill="#d9b58a" transform="rotate(16 116.6 82.4)"/><rect x="73.7" y="87.9" width="2.600" height=".9" fill="#ffffff" transform="rotate(13 73.7 87.9)"/><rect x="73.9" y="68.4" width="2.600" height=".9" fill="#e59aa8" transform="rotate(65 73.9 68.4)"/><rect x="107.9" y="85.5" width="2.600" height=".9" fill="#f3e7c8" transform="rotate(23 107.9 85.5)"/><rect x="84.0" y="68.4" width="2.600" height=".9" fill="#e59aa8" transform="rotate(14 84.0 68.4)"/><rect x="107.9" y="92.5" width="2.600" height=".9" fill="#d9b58a" transform="rotate(117 107.9 92.5)"/><rect x="67.7" y="106.0" width="2.600" height=".9" fill="#ffffff" transform="rotate(112 67.7 106.0)"/><rect x="110.8" y="94.9" width="2.600" height=".9" fill="#f2c96a" transform="rotate(137 110.8 94.9)"/><rect x="65.5" y="99.2" width="2.600" height=".9" fill="#e59aa8" transform="rotate(83 65.5 99.2)"/><rect x="91.3" y="103.3" width="2.600" height=".9" fill="#ffffff" transform="rotate(106 91.3 103.3)"/><rect x="90.2" y="100.6" width="2.600" height=".9" fill="#f2c96a" transform="rotate(5 90.2 100.6)"/><rect x="67.0" y="108.2" width="2.600" height=".9" fill="#f2c96a" transform="rotate(142 67.0 108.2)"/><rect x="106.4" y="104.6" width="2.600" height=".9" fill="#d9b58a" transform="rotate(169 106.4 104.6)"/><rect x="94.6" y="62.9" width="2.600" height=".9" fill="#d9b58a" transform="rotate(132 94.6 62.9)"/><rect x="60.5" y="81.4" width="2.600" height=".9" fill="#ffffff" transform="rotate(129 60.5 81.4)"/><rect x="104.9" y="108.4" width="2.600" height=".9" fill="#f3e7c8" transform="rotate(8 104.9 108.4)"/><rect x="65.2" y="77.2" width="2.600" height=".9" fill="#f3e7c8" transform="rotate(68 65.2 77.2)"/><rect x="72.3" y="111.3" width="2.600" height=".9" fill="#f3e7c8" transform="rotate(5 72.3 111.3)"/><rect x="74.8" y="61.7" width="2.600" height=".9" fill="#d9b58a" transform="rotate(171 74.8 61.7)"/><rect x="84.1" y="99.3" width="2.600" height=".9" fill="#d9b58a" transform="rotate(179 84.1 99.3)"/><rect x="62.0" y="85.2" width="2.600" height=".9" fill="#f3e7c8" transform="rotate(19 62.0 85.2)"/><rect x="99.3" y="82.1" width="2.600" height=".9" fill="#d9b58a" transform="rotate(58 99.3 82.1)"/><rect x="93.3" y="98.4" width="2.600" height=".9" fill="#e59aa8" transform="rotate(180 93.3 98.4)"/><rect x="63.4" y="94.3" width="2.600" height=".9" fill="#f2c96a" transform="rotate(170 63.4 94.3)"/><rect x="75.0" y="101.3" width="2.600" height=".9" fill="#ffffff" transform="rotate(63 75.0 101.3)"/><rect x="106.5" y="83.0" width="2.600" height=".9" fill="#ffffff" transform="rotate(42 106.5 83.0)"/><rect x="105.4" y="61.0" width="2.600" height=".9" fill="#d9b58a" transform="rotate(75 105.4 61.0)"/><rect x="89.0" y="61.9" width="2.600" height=".9" fill="#ffffff" transform="rotate(93 89.0 61.9)"/><rect x="98.8" y="103.1" width="2.600" height=".9" fill="#e59aa8" transform="rotate(160 98.8 103.1)"/><rect x="110.0" y="102.1" width="2.600" height=".9" fill="#d9b58a" transform="rotate(165 110.0 102.1)"/><rect x="110.2" y="79.9" width="2.600" height=".9" fill="#e59aa8" transform="rotate(154 110.2 79.9)"/><rect x="86.3" y="102.1" width="2.600" height=".9" fill="#f2c96a" transform="rotate(105 86.3 102.1)"/><rect x="114.5" y="75.5" width="2.600" height=".9" fill="#f2c96a" transform="rotate(97 114.5 75.5)"/><rect x="74.3" y="61.5" width="2.600" height=".9" fill="#d9b58a" transform="rotate(107 74.3 61.5)"/><rect x="73.7" y="78.6" width="2.600" height=".9" fill="#f3e7c8" transform="rotate(39 73.7 78.6)"/><rect x="84.8" y="114.7" width="2.600" height=".9" fill="#d9b58a" transform="rotate(36 84.8 114.7)"/><rect x="76.6" y="100.7" width="2.600" height=".9" fill="#e59aa8" transform="rotate(139 76.6 100.7)"/><rect x="65.6" y="99.6" width="2.600" height=".9" fill="#e59aa8" transform="rotate(126 65.6 99.6)"/><rect x="60.0" y="92.7" width="2.600" height=".9" fill="#d9b58a" transform="rotate(148 60.0 92.7)"/><rect x="119.4" y="92.5" width="2.600" height=".9" fill="#ffffff" transform="rotate(13 119.4 92.5)"/><rect x="94.1" y="58.1" width="2.600" height=".9" fill="#e59aa8" transform="rotate(8 94.1 58.1)"/><rect x="107.1" y="71.4" width="2.600" height=".9" fill="#f3e7c8" transform="rotate(140 107.1 71.4)"/><rect x="116.0" y="79.6" width="2.600" height=".9" fill="#e59aa8" transform="rotate(44 116.0 79.6)"/><rect x="90.2" y="73.3" width="2.600" height=".9" fill="#f3e7c8" transform="rotate(112 90.2 73.3)"/><rect x="101.2" y="77.4" width="2.600" height=".9" fill="#f2c96a" transform="rotate(156 101.2 77.4)"/><rect x="93.3" y="98.8" width="2.600" height=".9" fill="#f3e7c8" transform="rotate(144 93.3 98.8)"/><rect x="111.8" y="102.7" width="2.600" height=".9" fill="#f2c96a" transform="rotate(53 111.8 102.7)"/><rect x="62.8" y="94.8" width="2.600" height=".9" fill="#f3e7c8" transform="rotate(61 62.8 94.8)"/><rect x="77.8" y="104.4" width="2.600" height=".9" fill="#e59aa8" transform="rotate(87 77.8 104.4)"/><rect x="71.6" y="66.1" width="2.600" height=".9" fill="#e59aa8" transform="rotate(88 71.6 66.1)"/><rect x="75.0" y="83.3" width="2.600" height=".9" fill="#ffffff" transform="rotate(49 75.0 83.3)"/><rect x="110.5" y="106.2" width="2.600" height=".9" fill="#f3e7c8" transform="rotate(164 110.5 106.2)"/><rect x="62.7" y="82.5" width="2.600" height=".9" fill="#f2c96a" transform="rotate(122 62.7 82.5)"/><rect x="88.8" y="69.8" width="2.600" height=".9" fill="#f2c96a" transform="rotate(122 88.8 69.8)"/><rect x="112.1" y="106.2" width="2.600" height=".9" fill="#d9b58a" transform="rotate(61 112.1 106.2)"/><rect x="75.0" y="84.0" width="2.600" height=".9" fill="#f2c96a" transform="rotate(89 75.0 84.0)"/><rect x="104.0" y="93.3" width="2.600" height=".9" fill="#e59aa8" transform="rotate(131 104.0 93.3)"/><rect x="72.0" y="66.1" width="2.600" height=".9" fill="#f2c96a" transform="rotate(27 72.0 66.1)"/><rect x="107.1" y="71.2" width="2.600" height=".9" fill="#d9b58a" transform="rotate(22 107.1 71.2)"/><rect x="99.3" y="100.9" width="2.600" height=".9" fill="#d9b58a" transform="rotate(130 99.3 100.9)"/><rect x="72.8" y="95.3" width="2.600" height=".9" fill="#ffffff" transform="rotate(34 72.8 95.3)"/><rect x="82.4" y="100.6" width="2.600" height=".9" fill="#e59aa8" transform="rotate(12 82.4 100.6)"/><rect x="88.6" y="64.6" width="2.600" height=".9" fill="#f2c96a" transform="rotate(133 88.6 64.6)"/><rect x="101.5" y="96.8" width="2.600" height=".9" fill="#e59aa8" transform="rotate(10 101.5 96.8)"/><rect x="108.8" y="92.6" width="2.600" height=".9" fill="#d9b58a" transform="rotate(44 108.8 92.6)"/><rect x="77.1" y="101.3" width="2.600" height=".9" fill="#d9b58a" transform="rotate(73 77.1 101.3)"/><rect x="92.5" y="75.4" width="2.600" height=".9" fill="#f3e7c8" transform="rotate(90 92.5 75.4)"/><rect x="101.6" y="106.1" width="2.600" height=".9" fill="#d9b58a" transform="rotate(123 101.6 106.1)"/><rect x="92.8" y="61.2" width="2.600" height=".9" fill="#e59aa8" transform="rotate(33 92.8 61.2)"/><rect x="65.1" y="76.7" width="2.600" height=".9" fill="#e59aa8" transform="rotate(70 65.1 76.7)"/><rect x="76.2" y="79.3" width="2.600" height=".9" fill="#e59aa8" transform="rotate(72 76.2 79.3)"/><rect x="74.0" y="83.0" width="2.600" height=".9" fill="#f2c96a" transform="rotate(32 74.0 83.0)"/><rect x="76.3" y="99.5" width="2.600" height=".9" fill="#ffffff" transform="rotate(152 76.3 99.5)"/><rect x="112.0" y="67.5" width="2.600" height=".9" fill="#d9b58a" transform="rotate(69 112.0 67.5)"/><rect x="102.5" y="77.3" width="2.600" height=".9" fill="#d9b58a" transform="rotate(90 102.5 77.3)"/><rect x="81.3" y="71.1" width="2.600" height=".9" fill="#ffffff" transform="rotate(155 81.3 71.1)"/><rect x="102.7" y="89.8" width="2.600" height=".9" fill="#f3e7c8" transform="rotate(114 102.7 89.8)"/><rect x="91.2" y="62.3" width="2.600" height=".9" fill="#d9b58a" transform="rotate(89 91.2 62.3)"/><rect x="77.3" y="76.3" width="2.600" height=".9" fill="#e59aa8" transform="rotate(141 77.3 76.3)"/><rect x="108.9" y="92.0" width="2.600" height=".9" fill="#ffffff" transform="rotate(116 108.9 92.0)"/><rect x="101.0" y="97.9" width="2.600" height=".9" fill="#e59aa8" transform="rotate(118 101.0 97.9)"/><rect x="106.2" y="107.8" width="2.600" height=".9" fill="#f3e7c8" transform="rotate(112 106.2 107.8)"/><rect x="111.7" y="90.8" width="2.600" height=".9" fill="#ffffff" transform="rotate(91 111.7 90.8)"/><rect x="58.4" y="79.6" width="2.600" height=".9" fill="#f2c96a" transform="rotate(58 58.4 79.6)"/><rect x="83.3" y="74.0" width="2.600" height=".9" fill="#d9b58a" transform="rotate(154 83.3 74.0)"/></svg></div><div class="nm">Donut</div><div class="tg">A tag line</div></div>
<div class="dv" style="top:677px"></div>
<div class="h" style="top:703px;letter-spacing:.7px">Popular on Jetsnack</div>
<div class="abs" style="left:520px;top:707px"><svg class="" width="29" height="29" viewBox="0 0 24 24" style="" fill="none"><path d="M3 12h17M13 5l7 7-7 7" stroke="#ded6fe" stroke-width="2.300" fill="none"/></svg></div>
<div class="circ" style="left:35px;top:773px"><svg width="174" height="174" viewBox="0 0 174 174"><defs><filter id="chbl" x="-30%" y="-30%" width="160%" height="160%"><feGaussianBlur stdDeviation="2.500"/></filter><linearGradient id="chbg" x1="0" y1="1" x2="1" y2="0"><stop offset="0" stop-color="#e2e0de"/><stop offset="1" stop-color="#f1efec"/></linearGradient><clipPath id="chclip"><path d="M72 25.700L96.600 33.400 108 68 96.600 96.600 60.500 150.700 47.600 148 2.400 105.600 34.700 65.600Z"/></clipPath></defs><rect width="174" height="174" fill="url(#chbg)"/><path d="M72 25.700L96.600 33.400 108 68 96.600 96.600 60.500 150.700 47.600 148 2.400 105.600 34.700 65.600Z" fill="#a9a6a8" opacity=".55" transform="translate(3 4)" filter="url(#chbl)"/><path d="M72 25.700L96.600 33.400 108 68 96.600 96.600 60.500 150.700 47.600 148 2.400 105.600 34.700 65.600Z" fill="#efebe2"/><g clip-path="url(#chclip)"><path d="M34 66L2 106l10 9 30-42z" fill="#dcd8cf"/><path d="M96 34l12 34-6 14-10-44z" fill="#e0dcd3"/><ellipse cx="110.7" cy="73.4" rx="4.4" ry="2.7" fill="#2b86c5" transform="rotate(-6 110.7 73.4)"/><ellipse cx="76" cy="99" rx="5.2" ry="2.2" fill="#174f80" transform="rotate(-3 76 99)"/><ellipse cx="88.8" cy="99" rx="4.7" ry="2.2" fill="#2b86c5" transform="rotate(-24 88.8 99)"/><ellipse cx="73.4" cy="114.6" rx="3.7" ry="3.0" fill="#174f80" transform="rotate(16 73.4 114.6)"/><ellipse cx="20.5" cy="116" rx="4.7" ry="2.5" fill="#2b86c5" transform="rotate(18 20.5 116)"/><ellipse cx="29.5" cy="121" rx="4.7" ry="2.2" fill="#1e6aa8" transform="rotate(40 29.5 121)"/><ellipse cx="47.6" cy="134" rx="3.6" ry="2.0" fill="#1e6aa8" transform="rotate(12 47.6 134)"/><ellipse cx="76" cy="29" rx="5.1" ry="2.4" fill="#174f80" transform="rotate(41 76 29)"/><ellipse cx="40" cy="142" rx="4.5" ry="2.8" fill="#2b86c5" transform="rotate(-59 40 142)"/><ellipse cx="12" cy="108" rx="3.7" ry="2.8" fill="#2b86c5" transform="rotate(60 12 108)"/><ellipse cx="58" cy="140" rx="5.5" ry="3.0" fill="#174f80" transform="rotate(-30 58 140)"/><ellipse cx="70" cy="128" rx="5.0" ry="2.6" fill="#1e6aa8" transform="rotate(-52 70 128)"/><ellipse cx="84" cy="32" rx="5.0" ry="2.5" fill="#2b86c5" transform="rotate(-14 84 32)"/><ellipse cx="100" cy="60" rx="5.4" ry="3.0" fill="#1e6aa8" transform="rotate(-34 100 60)"/><ellipse cx="8" cy="100" rx="5.4" ry="2.1" fill="#2b86c5" transform="rotate(58 8 100)"/><ellipse cx="34" cy="128" rx="4.3" ry="2.1" fill="#174f80" transform="rotate(-36 34 128)"/><path d="M30 84l8 14M35 81l8 14M40 78l8 14" stroke="#4aa3d8" stroke-width="2" opacity=".8"/><path d="M12 94l10 16" stroke="#1c2430" stroke-width="3"/><path d="M18 92l8 13" stroke="#1c2430" stroke-width="1.500"/><circle cx="85" cy="52" r="9" fill="none" stroke="#2a3550" stroke-width="1.200" opacity=".8"/><circle cx="84" cy="53" r="2.200" fill="#1c2a44"/><path d="M60 74q16 6 30 22" stroke="#3a4a66" stroke-width="1.100" fill="none" opacity=".8"/><path d="M52.700 79.800L36 104.300 66.900 103Z" fill="#5e4b40"/><path d="M51.400 103L37.300 119.800 60.500 128.800Z" fill="#5a473d"/><path d="M52 84l-8 14 14-1z" fill="#75625a"/><text x="50" y="66" font-family="Liberation Sans, sans-serif" font-weight="700" font-size="17.500" fill="#dd1f26" stroke="#dd1f26" stroke-width=".9" textLength="58" lengthAdjust="spacingAndGlyphs" transform="rotate(33 50 66)">ANITOS</text></g><polygon points="134,48.900 119.800,56.600 125,73.400 140.400,72" fill="#aaa6a6" opacity=".5" transform="translate(2 3)" filter="url(#chbl)"/><polygon points="134,48.900 119.800,56.600 125,73.400 140.400,72" fill="#5a463c"/><polygon points="116,73.400 109.500,87.500 128.800,101.700 132.700,78.500" fill="#aaa6a6" opacity=".5" transform="translate(2 3)" filter="url(#chbl)"/><polygon points="116,73.400 109.500,87.500 128.800,101.700 132.700,78.500" fill="#574339"/><polygon points="141.700,104.300 109.500,119.800 118.500,143 145.600,127.500" fill="#aaa6a6" opacity=".5" transform="translate(2 3)" filter="url(#chbl)"/><polygon points="141.700,104.300 109.500,119.800 118.500,143 145.600,127.500" fill="#5b473d"/><polygon points="132,54 124,60 128,70" fill="#77635a"/><polygon points="118,80 114,88 126,96" fill="#726058"/><polygon points="136,110 116,120 122,136" fill="#75625a"/></svg></div>
<div class="circ" style="left:243.500px;top:773px"><svg width="174" height="174" viewBox="0 0 174 174"><defs><filter id="prbl" x="-30%" y="-30%" width="160%" height="160%"><feGaussianBlur stdDeviation="2"/></filter><linearGradient id="prbg" x1="0" y1="0" x2="1" y2="1"><stop offset="0" stop-color="#cfc1cb"/><stop offset="1" stop-color="#e0d6de"/></linearGradient></defs><rect width="174" height="174" fill="url(#prbg)"/><g transform="rotate(185 105 54)"><ellipse cx="107.5" cy="58" rx="20.5" ry="24.5" fill="#9e8d9a" opacity=".75" filter="url(#prbl)"/><path d="M84.5 47.875C84.5 28.275 102.95 25.825000000000003 105 34.4C107.05 25.825000000000003 125.5 28.275 125.5 49.1C125.5 68.7 115.25 78.5 105 78.5C94.75 78.5 84.5 68.7 84.5 47.875Z" fill="#f0ede6"/><ellipse cx="96.8" cy="43.22" rx="6.970000000000001" ry="6.37" fill="#bfaebb"/><ellipse cx="97.8" cy="44.72" rx="5.5760000000000005" ry="4.7775" fill="#d2c5cf"/><ellipse cx="114.02" cy="51.55" rx="5.33" ry="7.35" fill="#bfaebb"/><ellipse cx="115.02" cy="53.05" rx="4.264" ry="5.512499999999999" fill="#d2c5cf"/><ellipse cx="104.18" cy="67.23" rx="4.92" ry="4.9" fill="#bfaebb"/><ellipse cx="105.18" cy="68.73" rx="3.936" ry="3.6750000000000003" fill="#d2c5cf"/></g><g transform="rotate(170 102.4 16)"><ellipse cx="104.9" cy="20" rx="24.5" ry="21.0" fill="#9e8d9a" opacity=".75" filter="url(#prbl)"/><path d="M77.9 10.75C77.9 -6.050000000000001 99.95 -8.149999999999999 102.4 -0.8000000000000007C104.85000000000001 -8.149999999999999 126.9 -6.050000000000001 126.9 11.8C126.9 28.6 114.65 37.0 102.4 37.0C90.15 37.0 77.9 28.6 77.9 10.75Z" fill="#f0ede6"/><ellipse cx="92.60000000000001" cy="6.76" rx="8.33" ry="5.46" fill="#bfaebb"/><ellipse cx="93.60000000000001" cy="8.26" rx="6.664000000000001" ry="4.095" fill="#d2c5cf"/><ellipse cx="113.18" cy="13.9" rx="6.37" ry="6.3" fill="#bfaebb"/><ellipse cx="114.18" cy="15.4" rx="5.096" ry="4.725" fill="#d2c5cf"/><ellipse cx="101.42" cy="27.34" rx="5.88" ry="4.2" fill="#bfaebb"/><ellipse cx="102.42" cy="28.84" rx="4.704" ry="3.1500000000000004" fill="#d2c5cf"/></g><g transform="rotate(150 150 41)"><ellipse cx="152.5" cy="45" rx="19.0" ry="22.0" fill="#9e8d9a" opacity=".75" filter="url(#prbl)"/><path d="M131.0 35.5C131.0 17.9 148.1 15.700000000000003 150 23.4C151.9 15.700000000000003 169.0 17.9 169.0 36.6C169.0 54.2 159.5 63.0 150 63.0C140.5 63.0 131.0 54.2 131.0 35.5Z" fill="#f0ede6"/><ellipse cx="142.4" cy="31.32" rx="6.460000000000001" ry="5.720000000000001" fill="#bfaebb"/><ellipse cx="143.4" cy="32.82" rx="5.168000000000001" ry="4.290000000000001" fill="#d2c5cf"/><ellipse cx="158.36" cy="38.8" rx="4.94" ry="6.6" fill="#bfaebb"/><ellipse cx="159.36" cy="40.3" rx="3.9520000000000004" ry="4.949999999999999" fill="#d2c5cf"/><ellipse cx="149.24" cy="52.88" rx="4.56" ry="4.4" fill="#bfaebb"/><ellipse cx="150.24" cy="54.38" rx="3.6479999999999997" ry="3.3000000000000003" fill="#d2c5cf"/></g><g transform="rotate(200 68.9 52.7)"><ellipse cx="71.4" cy="56.7" rx="25.5" ry="26.5" fill="#9e8d9a" opacity=".75" filter="url(#prbl)"/><path d="M43.400000000000006 46.075C43.400000000000006 24.875 66.35000000000001 22.225000000000005 68.9 31.5C71.45 22.225000000000005 94.4 24.875 94.4 47.400000000000006C94.4 68.6 81.65 79.2 68.9 79.2C56.150000000000006 79.2 43.400000000000006 68.6 43.400000000000006 46.075Z" fill="#f0ede6"/><ellipse cx="58.7" cy="41.040000000000006" rx="8.67" ry="6.890000000000001" fill="#bfaebb"/><ellipse cx="59.7" cy="42.540000000000006" rx="6.936" ry="5.1675" fill="#d2c5cf"/><ellipse cx="80.12" cy="50.050000000000004" rx="6.63" ry="7.949999999999999" fill="#bfaebb"/><ellipse cx="81.12" cy="51.550000000000004" rx="5.304" ry="5.9624999999999995" fill="#d2c5cf"/><ellipse cx="67.88000000000001" cy="67.01" rx="6.12" ry="5.300000000000001" fill="#bfaebb"/><ellipse cx="68.88000000000001" cy="68.51" rx="4.896000000000001" ry="3.9750000000000005" fill="#d2c5cf"/></g><g transform="rotate(-10 28.9 69.5)"><ellipse cx="31.4" cy="73.5" rx="24.5" ry="27.0" fill="#9e8d9a" opacity=".75" filter="url(#prbl)"/><path d="M4.399999999999999 62.75C4.399999999999999 41.15 26.45 38.45 28.9 47.9C31.349999999999998 38.45 53.4 41.15 53.4 64.1C53.4 85.7 41.15 96.5 28.9 96.5C16.65 96.5 4.399999999999999 85.7 4.399999999999999 62.75Z" fill="#f0ede6"/><ellipse cx="19.099999999999998" cy="57.62" rx="8.33" ry="7.0200000000000005" fill="#bfaebb"/><ellipse cx="20.099999999999998" cy="59.12" rx="6.664000000000001" ry="5.265000000000001" fill="#d2c5cf"/><ellipse cx="39.68" cy="66.8" rx="6.37" ry="8.1" fill="#bfaebb"/><ellipse cx="40.68" cy="68.3" rx="5.096" ry="6.074999999999999" fill="#d2c5cf"/><ellipse cx="27.919999999999998" cy="84.08" rx="5.88" ry="5.4" fill="#bfaebb"/><ellipse cx="28.919999999999998" cy="85.58" rx="4.704" ry="4.050000000000001" fill="#d2c5cf"/></g><g transform="rotate(15 135.9 95.3)"><ellipse cx="138.4" cy="99.3" rx="24.5" ry="26.0" fill="#9e8d9a" opacity=".75" filter="url(#prbl)"/><path d="M111.4 88.8C111.4 68.0 133.45000000000002 65.4 135.9 74.5C138.35 65.4 160.4 68.0 160.4 90.1C160.4 110.89999999999999 148.15 121.3 135.9 121.3C123.65 121.3 111.4 110.89999999999999 111.4 88.8Z" fill="#f0ede6"/><ellipse cx="126.10000000000001" cy="83.86" rx="8.33" ry="6.76" fill="#bfaebb"/><ellipse cx="127.10000000000001" cy="85.36" rx="6.664000000000001" ry="5.07" fill="#d2c5cf"/><ellipse cx="146.68" cy="92.7" rx="6.37" ry="7.8" fill="#bfaebb"/><ellipse cx="147.68" cy="94.2" rx="5.096" ry="5.85" fill="#d2c5cf"/><ellipse cx="134.92000000000002" cy="109.34" rx="5.88" ry="5.2" fill="#bfaebb"/><ellipse cx="135.92000000000002" cy="110.84" rx="4.704" ry="3.9000000000000004" fill="#d2c5cf"/></g><path d="M24 112c6-8 20-6 22 2l-4 6c-4-4-10-2-10 6s4 14 10 16l-2 8c-12 0-20-12-20-24 0-6 2-10 4-14z" fill="#9e8d9a" opacity=".7" transform="translate(2.500 4)" filter="url(#prbl)"/><path d="M24 112c6-8 20-6 22 2l-4 6c-4-4-10-2-10 6s4 14 10 16l-2 8c-12 0-20-12-20-24 0-6 2-10 4-14z" fill="#f0ede6"/><path d="M66 96c8-4 22-2 28 8l-8 6-6-6-8 8-8-4z" fill="#9e8d9a" opacity=".7" transform="translate(2.500 4)" filter="url(#prbl)"/><path d="M66 96c8-4 22-2 28 8l-8 6-6-6-8 8-8-4z" fill="#f0ede6"/><path d="M92 130c-8 2-12 12-8 22l8 6 4-6c-4-4-4-12 2-16z" fill="#9e8d9a" opacity=".7" transform="translate(2.500 4)" filter="url(#prbl)"/><path d="M92 130c-8 2-12 12-8 22l8 6 4-6c-4-4-4-12 2-16z" fill="#f0ede6"/><path d="M44 127l3 6M70 110l4 5M96 154l5 2" stroke="#c8763a" stroke-width="2.500"/></svg></div>
<div class="circ" style="left:452px;top:773px"><svg width="174" height="174" viewBox="0 0 174 174"><defs><filter id="smbl" x="-30%" y="-30%" width="160%" height="160%"><feGaussianBlur stdDeviation="2.500"/></filter><radialGradient id="smg" cx=".5" cy=".5" r=".5"><stop offset="0" stop-color="#ec8085"/><stop offset=".82" stop-color="#e9747c"/><stop offset="1" stop-color="#f6c0c2"/></radialGradient><linearGradient id="smbg" x1="0" y1="1" x2="1" y2="0"><stop offset="0" stop-color="#bfdfe6"/><stop offset="1" stop-color="#cbe6ec"/></linearGradient></defs><rect width="174" height="174" fill="url(#smbg)"/><ellipse cx="60" cy="41" rx="14" ry="14" fill="#86aab2" opacity=".6" filter="url(#smbl)"/><path d="M44 30c2-6 24-8 27 0 2 8-6 22-13 24-8-2-16-14-14-24z" fill="#dc2c20"/><path d="M52 32c2-3 10-3 12 0 0 6-3 12-6 14-3-2-6-8-6-14z" fill="#ea4a38"/><path d="M50 28l2-9 3 6 3-12 3 11 5-7 1 9 6-3-4 8z" fill="#7fa02c"/><ellipse cx="25" cy="79" rx="15" ry="14" fill="#86aab2" opacity=".6" filter="url(#smbl)"/><path d="M10 66c8-6 24-6 26 2 2 10 0 18-4 20-8 2-20 0-22-4-3-6-3-12 0-18z" fill="#dd2a1e"/><path d="M16 72c4-4 12-2 14 2 1 4 0 8-2 10-4 0-10-2-12-4-1-2-1-6 0-8z" fill="#ee5a44"/><path d="M14 70l-11-6 8 0-8-8 10 4-3-9 8 8 2-9 3 12z" fill="#86a62e"/><circle cx="103" cy="101" r="44" fill="#86aab2" opacity=".55" filter="url(#smbl)"/><circle cx="100.800" cy="96.600" r="42.500" fill="#8e9599"/><circle cx="100.800" cy="96.600" r="40" fill="#f3dadb"/><circle cx="100.800" cy="96.600" r="37.500" fill="url(#smg)"/><circle cx="124.1" cy="106.1" r=".8" fill="#4a3a3a" opacity=".8"/><circle cx="105.2" cy="75.1" r=".8" fill="#4a3a3a" opacity=".8"/><circle cx="121.5" cy="98.5" r=".8" fill="#4a3a3a" opacity=".8"/><circle cx="118.1" cy="83.1" r=".8" fill="#4a3a3a" opacity=".8"/><circle cx="116.7" cy="93.8" r=".8" fill="#4a3a3a" opacity=".8"/><circle cx="116.2" cy="77.7" r=".8" fill="#4a3a3a" opacity=".8"/><circle cx="113.0" cy="86.2" r=".8" fill="#4a3a3a" opacity=".8"/><circle cx="119.2" cy="107.8" r=".8" fill="#4a3a3a" opacity=".8"/><circle cx="123.9" cy="91.6" r=".8" fill="#4a3a3a" opacity=".8"/><circle cx="113.3" cy="81.7" r=".8" fill="#4a3a3a" opacity=".8"/><circle cx="104.8" cy="73.0" r=".8" fill="#4a3a3a" opacity=".8"/><circle cx="113.8" cy="83.5" r=".8" fill="#4a3a3a" opacity=".8"/><circle cx="112.0" cy="104.1" r=".8" fill="#4a3a3a" opacity=".8"/><circle cx="115.0" cy="92.2" r=".8" fill="#4a3a3a" opacity=".8"/><circle cx="109.0" cy="72.9" r=".8" fill="#4a3a3a" opacity=".8"/><circle cx="110.8" cy="76.9" r=".8" fill="#4a3a3a" opacity=".8"/><circle cx="114.7" cy="108.0" r=".8" fill="#4a3a3a" opacity=".8"/><circle cx="118.2" cy="78.5" r=".8" fill="#4a3a3a" opacity=".8"/><circle cx="122.8" cy="100.7" r=".8" fill="#4a3a3a" opacity=".8"/><circle cx="119.4" cy="104.6" r=".8" fill="#4a3a3a" opacity=".8"/><circle cx="120.0" cy="100.4" r=".8" fill="#4a3a3a" opacity=".8"/><circle cx="111.4" cy="107.3" r=".8" fill="#4a3a3a" opacity=".8"/><circle cx="124.2" cy="77.8" r=".8" fill="#4a3a3a" opacity=".8"/><circle cx="119.8" cy="97.7" r=".8" fill="#4a3a3a" opacity=".8"/><circle cx="113.7" cy="91.1" r=".8" fill="#4a3a3a" opacity=".8"/><circle cx="114.3" cy="105.3" r=".8" fill="#4a3a3a" opacity=".8"/><circle cx="114.5" cy="101.9" r=".8" fill="#4a3a3a" opacity=".8"/><circle cx="111.4" cy="103.8" r=".8" fill="#4a3a3a" opacity=".8"/><circle cx="122.9" cy="88.6" r=".8" fill="#4a3a3a" opacity=".8"/><circle cx="115.9" cy="105.1" r=".8" fill="#4a3a3a" opacity=".8"/><circle cx="119.2" cy="89.5" r=".8" fill="#4a3a3a" opacity=".8"/><circle cx="108.7" cy="83.7" r=".8" fill="#4a3a3a" opacity=".8"/><circle cx="118.7" cy="78.0" r=".8" fill="#4a3a3a" opacity=".8"/><circle cx="123.1" cy="81.7" r=".8" fill="#4a3a3a" opacity=".8"/><circle cx="123.1" cy="83.1" r=".8" fill="#4a3a3a" opacity=".8"/><circle cx="124.1" cy="97.4" r=".8" fill="#4a3a3a" opacity=".8"/><circle cx="114.6" cy="90.6" r=".8" fill="#4a3a3a" opacity=".8"/><circle cx="117.7" cy="93.2" r=".8" fill="#4a3a3a" opacity=".8"/><circle cx="110.5" cy="79.5" r=".8" fill="#4a3a3a" opacity=".8"/><circle cx="114.7" cy="105.6" r=".8" fill="#4a3a3a" opacity=".8"/><path d="M88 76c4-4 16-4 20 0 0 4-2 6-4 7h-12c-2-1-4-3-4-7z" fill="#d9362a"/><path d="M88 85c6-3 16-3 20 0 2 8-2 18-8 22-8-2-14-12-12-22z" fill="#e0402f"/><path d="M92 89c4-2 10-2 12 0 1 5-1 10-5 13-4-2-8-8-7-13z" fill="#f08a74"/><ellipse cx="79.500" cy="85" rx="7.500" ry="13" fill="#2c6a2a" transform="rotate(-4 79.500 85)"/><path d="M66 112c2-10 12-14 18-12 2 8-4 20-14 22-4-2-5-6-4-10z" fill="#3c8a36"/><path d="M82 104c10-6 24-2 30 10-8 8-24 8-30-10z" fill="#2f7a2e"/><path d="M110 116c4-2 8 0 10 6-4 2-8 0-10-6z" fill="#2a6a2a"/><path d="M84 106c8 0 18 4 26 8M70 120c4-6 8-12 12-18M79.500 74v22" stroke="#1f5420" stroke-width=".8" fill="none"/></svg></div>
<div class="lbl" style="left:11px">Chips</div><div class="lbl" style="left:220px">Pretzels</div><div class="lbl" style="left:474px;width:auto;text-align:left;letter-spacing:2.200px">Smoothies</div>
<div class="dv" style="top:1013px"></div>
<div class="h" style="top:1038px;letter-spacing:.25px">WFH favourites</div>
<div class="abs" style="left:520px;top:1042px"><svg class="" width="29" height="29" viewBox="0 0 24 24" style="" fill="none"><path d="M3 12h17M13 5l7 7-7 7" stroke="#ded6fe" stroke-width="2.300" fill="none"/></svg></div>
<div class="abs" style="left:36px;top:1097px;width:245px;height:200px;border-radius:29px;background:linear-gradient(90deg,#8c0062,#7a0085 50%,#6612a8)"></div>
<div class="abs" style="left:305px;top:1097px;width:245px;height:200px;border-radius:29px;background:linear-gradient(90deg,#6206c4,#5203dc 50%,#7406c6)"></div>
<div class="abs" style="left:0;top:1116px;width:569px;height:81px;background:#dfd6fe"></div>
<div class="abs" style="left:23px;top:1127px;width:181px;height:59px;border-radius:30px;border:3px solid #1b1a1e"></div>
<div class="abs" style="left:58px;top:1141px"><svg class="" width="31" height="31" viewBox="0 0 24 24" style="" fill="none"><path d="M12 5.690l5 4.500V18h-2v-6H9v6H7v-7.810l5-4.500M12 3L2 12h3v8h6v-6h2v6h6v-8h3z" fill="#1b1a1e"/></svg></div>
<div class="abs" style="left:100px;top:1143px;font-weight:700;font-size:20px;line-height:28px;letter-spacing:3.200px;color:#1b1a1e">HOME</div>
<div class="abs" style="left:268px;top:1141px"><svg class="" width="32" height="32" viewBox="0 0 24 24" style="" fill="none"><path d="M15.500 14h-.79l-.28-.27A6.470 6.470 0 0 0 16 9.500 6.500 6.500 0 1 0 9.500 16c1.610 0 3.090-.59 4.230-1.570l.27.28v.79l5 4.990L20.490 19zm-6 0C7.010 14 5 11.990 5 9.500S7.010 5 9.500 5 14 7.010 14 9.500 11.990 14 9.500 14" fill="#565268"/></svg></div>
<div class="abs" style="left:380px;top:1140px"><svg class="" width="32" height="32" viewBox="0 0 24 24" style="" fill="none"><path d="M15.550 13c.75 0 1.410-.41 1.750-1.030l3.580-6.490c.37-.66-.11-1.480-.87-1.480H5.210l-.94-2H1v2h2l3.600 7.590-1.350 2.440C4.520 15.370 5.480 17 7 17h12v-2H7l1.100-2zM6.160 6h12.150l-2.760 5H8.530zM7 18c-1.100 0-1.990.9-1.990 2S5.900 22 7 22s2-.9 2-2-.9-2-2-2m10 0c-1.100 0-1.990.9-1.990 2s.89 2 1.990 2 2-.9 2-2-.9-2-2-2" fill="#565268"/></svg></div>
<div class="abs" style="left:496px;top:1140px"><svg class="" width="33" height="33" viewBox="0 0 24 24" style="" fill="none"><path d="M12 2C6.480 2 2 6.480 2 12s4.480 10 10 10 10-4.480 10-10S17.520 2 12 2M7.350 18.500C8.660 17.560 10.260 17 12 17s3.340.56 4.650 1.500C15.340 19.440 13.740 20 12 20s-3.340-.56-4.650-1.500m10.790-1.380a9.947 9.947 0 0 0-12.280 0A7.957 7.957 0 0 1 4 12c0-4.420 3.580-8 8-8s8 3.580 8 8c0 1.950-.7 3.730-1.860 5.120M12 6c-1.930 0-3.500 1.570-3.500 3.500S10.070 13 12 13s3.500-1.570 3.500-3.500S13.930 6 12 6m0 5c-.83 0-1.500-.67-1.500-1.500S11.170 8 12 8s1.500.67 1.500 1.500S12.830 11 12 11" fill="#565268"/></svg></div>
<div class="abs" style="left:0;top:1197px;width:569px;height:34px;background:#1c1b1f"></div>
<div class="abs" style="left:205px;top:1211px;width:158px;height:6px;border-radius:3px;background:#fff"></div>
</div>
</div></body></html>
